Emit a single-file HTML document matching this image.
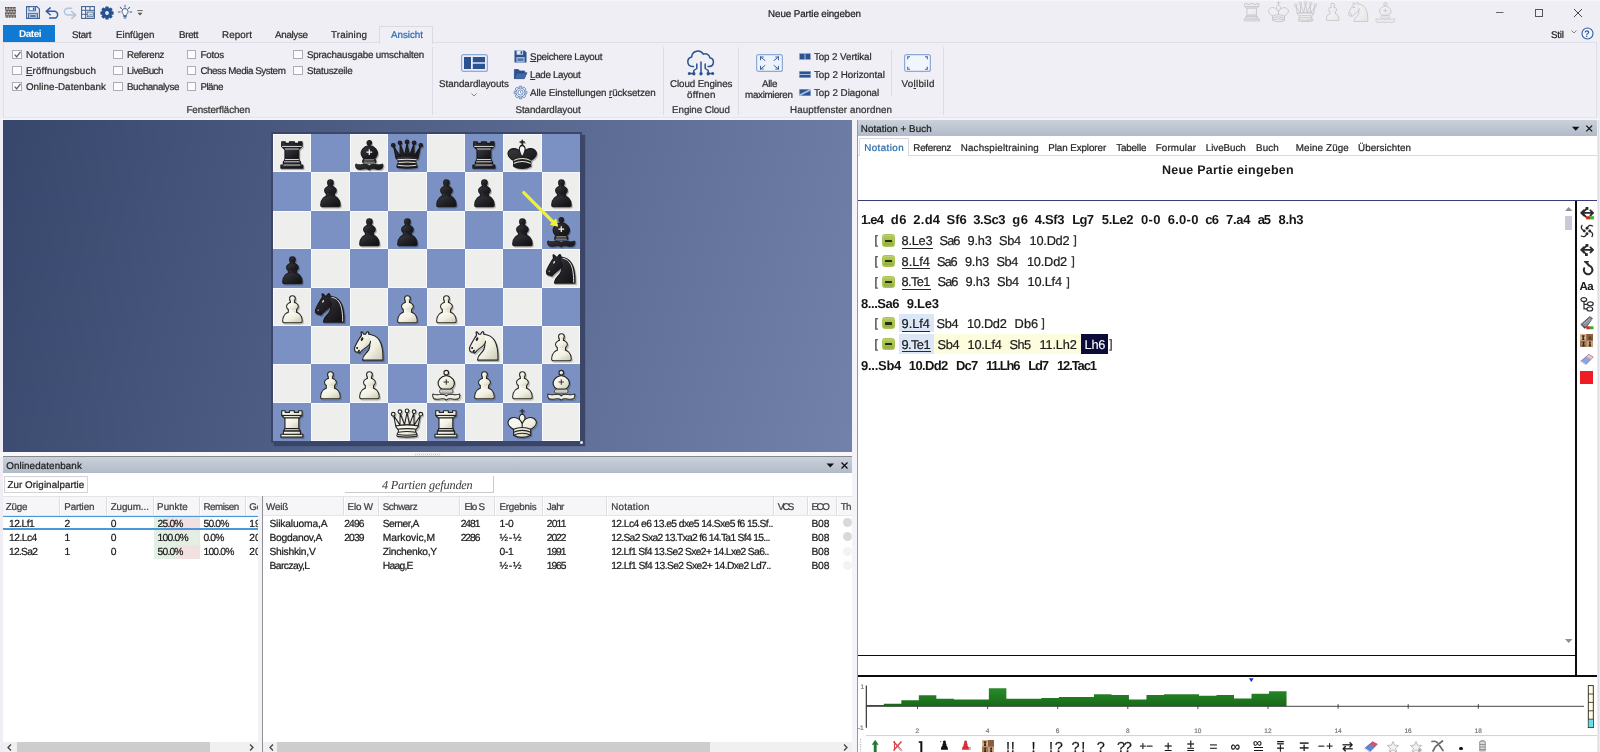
<!DOCTYPE html>
<html lang="de"><head><meta charset="utf-8"><title>Neue Partie eingeben</title>
<style>
*{box-sizing:border-box;margin:0;padding:0}
html,body{width:1600px;height:752px;overflow:hidden;background:#eeeef4}
body{font-family:"Liberation Sans",sans-serif;font-size:9.8px;color:#2e2e2e;text-rendering:geometricPrecision;position:relative;line-height:1}
.a{position:absolute}
.t{position:absolute;white-space:pre;-webkit-text-stroke:.22px currentColor}
.t u{text-decoration:underline;text-underline-offset:1px}
svg{position:absolute;overflow:visible}
.cb{position:absolute;width:9.400px;height:9.200px;border:1px solid #adadb5;background:#fcfcfe}
.sep{position:absolute;width:1px;background:#dcdde5;top:47px;height:68px}
.hdr{position:absolute;height:17px;background:linear-gradient(#cad1db,#bfc7d2 45%,#b1bac7);}
.sq{position:absolute;width:38.375px;height:38.375px}
.pc{position:absolute;width:38.375px;height:38.375px}
</style></head><body>
<div id="root" style="position:absolute;left:0;top:0;width:1600px;height:752px;will-change:transform"><svg width="0" height="0" style="position:absolute"><defs>
<linearGradient id="gw" x1="0" y1="0" x2="1" y2="1"><stop offset="0" stop-color="#ffffff"/><stop offset="0.55" stop-color="#f0efe0"/><stop offset="1" stop-color="#c9c8b4"/></linearGradient>
<linearGradient id="gb" x1="0" y1="0" x2="1" y2="1"><stop offset="0" stop-color="#3a3a40"/><stop offset="0.5" stop-color="#232327"/><stop offset="1" stop-color="#101012"/></linearGradient>
<g id="wP"><g stroke="#26261f" stroke-width="2.500" fill="#26261f" stroke-linejoin="round"><rect x="21" y="14" width="3.600" height="4.500"/><rect x="18.600" y="24.500" width="8.400" height="5"/><circle cx="22.800" cy="12.500" r="2.750"/><ellipse cx="22.800" cy="21.600" rx="6.300" ry="4.400"/><path d="M13.200 40.100C12.400 40.100 11.900 39.500 11.900 38.700C11.900 32.500 16 28.100 22.800 28.100C29.600 28.100 33.700 32.500 33.700 38.700C33.700 39.500 33.200 40.100 32.400 40.100z"/></g><g fill="url(#gw)"><rect x="21" y="14" width="3.600" height="4.500"/><rect x="18.600" y="24.500" width="8.400" height="5"/><circle cx="22.800" cy="12.500" r="2.750"/><ellipse cx="22.800" cy="21.600" rx="6.300" ry="4.400"/><path d="M13.200 40.100C12.400 40.100 11.900 39.500 11.900 38.700C11.900 32.500 16 28.100 22.800 28.100C29.600 28.100 33.700 32.500 33.700 38.700C33.700 39.500 33.200 40.100 32.400 40.100z"/></g></g>
<g id="bP"><g stroke="#1d1d20" stroke-width="2.500" fill="#1d1d20" stroke-linejoin="round"><rect x="21" y="14" width="3.600" height="4.500"/><rect x="18.600" y="24.500" width="8.400" height="5"/><circle cx="22.800" cy="12.500" r="2.750"/><ellipse cx="22.800" cy="21.600" rx="6.300" ry="4.400"/><path d="M13.200 40.100C12.400 40.100 11.900 39.500 11.900 38.700C11.900 32.500 16 28.100 22.800 28.100C29.600 28.100 33.700 32.500 33.700 38.700C33.700 39.500 33.200 40.100 32.400 40.100z"/></g><g fill="url(#gb)"><rect x="21" y="14" width="3.600" height="4.500"/><rect x="18.600" y="24.500" width="8.400" height="5"/><circle cx="22.800" cy="12.500" r="2.750"/><ellipse cx="22.800" cy="21.600" rx="6.300" ry="4.400"/><path d="M13.200 40.100C12.400 40.100 11.900 39.500 11.900 38.700C11.900 32.500 16 28.100 22.800 28.100C29.600 28.100 33.700 32.500 33.700 38.700C33.700 39.500 33.200 40.100 32.400 40.100z"/></g></g>
<g id="wR" fill="url(#gw)" stroke="#222" stroke-width="1.350" stroke-linejoin="round">
<path d="M9 40.5h27v-3.5H9z"/><path d="M12 37v-4h21v4z"/><path d="M10 15V9.500h4.300v2h5.200v-2h6v2h5.200v-2H35V15l-3.500 3H13.500z"/><path d="M31 18v12.500H14V18z"/><path d="M31 30.500l1.500 2.500h-20l1.500-2.500z"/><path d="M10 15h25" fill="none"/></g>
<g id="bR" fill="url(#gb)" stroke="#1a1a1c" stroke-width="1.4" stroke-linejoin="round">
<path d="M9 40.500h27v-3.500H9z"/><path d="M12 37v-4h21v4z"/><path d="M10 15V9.500h4.300v2h5.200v-2h6v2h5.200v-2H35V15l-3.500 3H13.500z"/><path d="M31 18v12.500H14V18z"/><path d="M31 30.500l1.500 2.500h-20l1.500-2.500z"/>
<path d="M12 36.800h21M13 33h19M14 30.300h17M14 18h17M10.500 15h24" fill="none" stroke="#e8e8e8" stroke-width="1.100"/></g>
<g id="wQ" fill="url(#gw)" stroke="#222" stroke-width="1.300" stroke-linejoin="round">
<path d="M9 26c8.500-1.500 21-1.500 27 0l2.500-12.500L31 25l-.3-14.100-5.200 13.600-3-14.500-3 14.500-5.200-13.600L14 25 6.500 13.500z"/>
<path d="M9 26c0 2 1.500 2 2.500 4 1 1.500 1 1 .5 3.500-1.500 1-1 2.500-1 2.500-1.500 1.500 0 2.500 0 2.500 6.500 1 16.500 1 23 0 0 0 1.500-1 0-2.500 0 0 .5-1.500-1-2.500-.5-2.500-.5-2 .5-3.500 1-2 2.500-2 2.500-4-8.500-1.500-18.500-1.500-27 0z"/>
<path d="M11.500 30c3.500-1 18.500-1 22 0M12 33.500c6-1 15-1 21 0M11 36.200c6.500 1 16.500 1 23 0" fill="none"/>
<circle cx="6" cy="12" r="2.200"/><circle cx="14" cy="9" r="2.200"/><circle cx="22.500" cy="8" r="2.200"/><circle cx="31" cy="9" r="2.200"/><circle cx="39" cy="12" r="2.200"/></g>
<g id="bQ" fill="url(#gb)" stroke="#1a1a1c" stroke-width="1.400" stroke-linejoin="round">
<path d="M9 26c8.500-1.500 21-1.500 27 0l2.500-12.500L31 25l-.3-14.100-5.200 13.600-3-14.500-3 14.500-5.200-13.600L14 25 6.500 13.500z"/>
<path d="M9 26c0 2 1.500 2 2.500 4 1 1.500 1 1 .5 3.500-1.500 1-1 2.500-1 2.500-1.500 1.500 0 2.500 0 2.500 6.500 1 16.500 1 23 0 0 0 1.500-1 0-2.500 0 0 .5-1.500-1-2.500-.5-2.500-.5-2 .5-3.500 1-2 2.500-2 2.500-4-8.500-1.500-18.500-1.500-27 0z"/>
<circle cx="6" cy="12" r="2.100"/><circle cx="14" cy="9" r="2.100"/><circle cx="22.500" cy="8" r="2.100"/><circle cx="31" cy="9" r="2.100"/><circle cx="39" cy="12" r="2.100"/>
<path d="M11 29.500c3.500-1 19.500-1 23 0M12.300 32.800c6-1 14.500-1 20.500 0M11.300 36c6.500 1 16 1 22.500 0" fill="none" stroke="#e8e4d8" stroke-width="1.200"/></g>
<g id="wK" fill="url(#gw)" stroke="#222" stroke-width="1.300" stroke-linejoin="round" stroke-linecap="round">
<path d="M22.500 11.630V6M20 8h5" fill="none"/>
<path d="M22.500 25s4.500-7.500 3-10.500c0 0-1-2.500-3-2.500s-3 2.500-3 2.500c-1.500 3 3 10.500 3 10.500"/>
<path d="M12.500 37c5.500 3.500 14.500 3.500 20 0v-7s9-4.500 6-10.500c-4-6.500-13.500-3.500-16 4V27v-3.500c-2.500-7.500-12-10.500-16-4-3 6 6 10.500 6 10.500z"/>
<path d="M12.500 30c5.500-3 14.500-3 20 0M12.500 33.500c5.500-3 14.500-3 20 0M12.500 37c5.500-3 14.500-3 20 0" fill="none"/></g>
<g id="bK" fill="url(#gb)" stroke="#1a1a1c" stroke-width="1.400" stroke-linejoin="round" stroke-linecap="round">
<path d="M22.500 11.630V6M20 8h5" fill="none" stroke-width="1.600"/>
<path d="M22.500 25s4.500-7.500 3-10.500c0 0-1-2.500-3-2.500s-3 2.500-3 2.500c-1.500 3 3 10.500 3 10.500"/>
<path d="M12.500 37c5.500 3.500 14.500 3.500 20 0v-7s9-4.500 6-10.500c-4-6.500-13.500-3.500-16 4V27v-3.500c-2.500-7.500-12-10.500-16-4-3 6 6 10.500 6 10.500z"/>
<path d="M22.500 24.500s3.600-6.500 2.600-9.300c0 0-.9-2-2.600-2s-2.600 2-2.600 2c-1 2.800 2.600 9.300 2.600 9.300z" fill="#f4f4f4" stroke="none"/>
<path d="M13 30c5.500-2.800 13.500-2.800 19 0M13 33.500c5.500-2.800 13.500-2.800 19 0" fill="none" stroke="#e8e4d8" stroke-width="1.200"/></g>
<g id="wB" fill="url(#gw)" stroke="#222" stroke-width="1.300" stroke-linejoin="round"><path fill="#efeee0" transform="translate(22.600 38.700) scale(.930 .900) translate(-22.600 -38.100)" d="M22.600 36.600c2-2 5.500-2.300 9-1.600c3 .6 5.500.3 7.800-.9c.8 1.800.5 4.200-.8 6c-2.500 1.500-5.500 1.200-8.500.6c-3-.6-5.800-.3-7.500 1.400c-1.700-1.700-4.500-2-7.500-1.400c-3 .6-6 .9-8.500-.6c-1.300-1.800-1.600-4.200-.8-6c2.300 1.200 4.800 1.500 7.800.9c3.500-.7 7-.4 9 1.600z"/><path fill="#f3f2e6" stroke-width=".9" d="M16.300 29.300h12.600c1.600 1 1.900 3.300.900 4.800H15.400c-1-1.500-.7-3.800.9-4.800z"/><path d="M22.600 13.400C30 14.600 33 20 32 24.200C31.300 27 29.200 28.700 27.600 29.300L17.600 29.300C16 28.700 13.900 27 13.200 24.200C12.200 20 15.200 14.600 22.600 13.400z"/><circle cx="22.600" cy="10.200" r="2.700"/><path d="M16.200 31.700h12.800" fill="none" stroke-width=".6" stroke="#555"/><path d="M22.600 18v6.400M19.400 21.200h6.400" fill="none" stroke="#3a2a2a" stroke-width="1.200"/></g>
<g id="bB" fill="url(#gb)" stroke="#1a1a1c" stroke-width="1.200" stroke-linejoin="round"><path transform="translate(22.600 38.700) scale(.930 .900) translate(-22.600 -38.100)" d="M22.600 36.600c2-2 5.500-2.300 9-1.600c3 .6 5.500.3 7.800-.9c.8 1.800.5 4.200-.8 6c-2.500 1.500-5.500 1.200-8.500.6c-3-.6-5.800-.3-7.500 1.400c-1.700-1.700-4.500-2-7.500-1.400c-3 .6-6 .9-8.500-.6c-1.300-1.800-1.600-4.200-.8-6c2.300 1.200 4.800 1.500 7.800.9c3.500-.7 7-.4 9 1.600z"/><path d="M16.300 29.300h12.600c1.600 1 1.900 3.300.900 4.800H15.400c-1-1.500-.7-3.800.9-4.800z"/><path d="M22.600 13.400C30 14.600 33 20 32 24.200C31.300 27 29.200 28.700 27.600 29.300L17.600 29.300C16 28.700 13.900 27 13.200 24.200C12.200 20 15.200 14.600 22.600 13.400z"/><circle cx="22.600" cy="10.200" r="2.700"/><path d="M16.800 30.300h11.600M16 33h13.200" fill="none" stroke="#e8e4d8" stroke-width=".8"/><path d="M22.600 17.800v6.800M19.200 21.200h6.800" fill="none" stroke="#f4f4f4" stroke-width="1.500"/></g>
<g id="wN" fill="url(#gw)" stroke="#222" stroke-width="1.300" stroke-linejoin="round" stroke-linecap="round">
<path d="M22 10c10.500 1 16.500 8 16 29H15c0-9 10-6.500 8-21"/>
<path d="M24 18c.38 2.910-5.550 7.370-8 9-3 2-2.820 4.340-5 4-1.042-.94 1.410-3.040 0-3-1 0 .19 1.230-1 2-1 0-4.003 1-4-4 0-2 6-12 6-12s1.890-1.900 2-3.500c-.73-.994-.5-2-.5-3 1-1 3 2.500 3 2.500h2s.78-1.992 2.500-3c1 0 1 3 1 3"/>
<circle cx="9" cy="25.500" r=".5" fill="#222"/><ellipse cx="14.500" cy="15.500" rx=".6" ry="1.500" transform="rotate(30 14.500 15.500)" fill="#222"/></g>
<g id="bN" fill="url(#gb)" stroke="#1a1a1c" stroke-width="1.400" stroke-linejoin="round" stroke-linecap="round">
<path d="M22 10c10.500 1 16.500 8 16 29H15c0-9 10-6.500 8-21"/>
<path d="M24 18c.38 2.910-5.550 7.370-8 9-3 2-2.820 4.340-5 4-1.042-.94 1.410-3.040 0-3-1 0 .19 1.230-1 2-1 0-4.003 1-4-4 0-2 6-12 6-12s1.890-1.900 2-3.500c-.73-.994-.5-2-.5-3 1-1 3 2.500 3 2.500h2s.78-1.992 2.500-3c1 0 1 3 1 3"/>
<path d="M24.500 11.200c7.500 1.500 12 7.500 12 26.800" fill="none" stroke="#e8e8e8" stroke-width="1.100"/>
<ellipse cx="14.500" cy="15.700" rx=".8" ry="1.600" transform="rotate(35 14.500 15.700)" fill="#f0f0f0" stroke="none"/><circle cx="9" cy="25.700" r=".7" fill="#ddd" stroke="none"/></g>
</defs></svg>
<!-- title bar -->

<div class="a" style="left:0;top:0;width:1600px;height:1px;background:#f6f6fa"></div>
<div class="t" style="left:768.1px;top:9.0px;height:12px;line-height:12px;color:#1e1e1e;letter-spacing:-0.10px">Neue Partie eingeben</div>
<svg style="left:5px;top:7px" width="11" height="11" viewBox="0 0 11 11"><rect width="11" height="11" fill="#8b8682"/><g fill="#4d4946"><rect x="0" y="0" width="1.4" height="1.4"/><rect x="2.75" y="0" width="1.4" height="1.4"/><rect x="5.5" y="0" width="1.4" height="1.4"/><rect x="8.25" y="0" width="1.4" height="1.4"/><rect x="1.4" y="2.75" width="1.4" height="1.4"/><rect x="4.1" y="2.75" width="1.4" height="1.4"/><rect x="6.9" y="2.75" width="1.4" height="1.4"/><rect x="9.6" y="2.75" width="1.4" height="1.4"/><rect x="0" y="5.5" width="1.4" height="1.4"/><rect x="2.75" y="5.5" width="1.4" height="1.4"/><rect x="5.5" y="5.5" width="1.4" height="1.4"/><rect x="8.25" y="5.5" width="1.4" height="1.4"/><rect x="1.4" y="8.25" width="1.4" height="1.4"/><rect x="4.1" y="8.25" width="1.4" height="1.4"/><rect x="6.9" y="8.25" width="1.4" height="1.4"/><rect x="9.6" y="8.25" width="1.4" height="1.4"/></g><g fill="#cfcac4"><rect x="1.4" y="1.4" width="1.3" height="1.3"/><rect x="4.1" y="1.4" width="1.3" height="1.3"/><rect x="6.9" y="1.4" width="1.3" height="1.3"/><rect x="9.6" y="1.4" width="1.3" height="1.3"/><rect x="0" y="4.1" width="1.3" height="1.3"/><rect x="2.75" y="4.1" width="1.3" height="1.3"/><rect x="5.5" y="4.1" width="1.3" height="1.3"/><rect x="8.25" y="4.1" width="1.3" height="1.3"/><rect x="1.4" y="6.9" width="1.3" height="1.3"/><rect x="4.1" y="6.9" width="1.3" height="1.3"/><rect x="6.9" y="6.9" width="1.3" height="1.3"/><rect x="9.6" y="6.9" width="1.3" height="1.3"/><rect x="0" y="9.6" width="1.3" height="1.3"/><rect x="2.75" y="9.6" width="1.3" height="1.3"/><rect x="5.5" y="9.6" width="1.3" height="1.3"/><rect x="8.25" y="9.6" width="1.3" height="1.3"/></g></svg>
<svg style="left:26px;top:6px" width="14" height="13" viewBox="0 0 14 13"><path d="M.6.6h10.400l2.400 2.300v9.500H.6z" fill="#e4ebf5" stroke="#3d5f96" stroke-width="1.100"/><rect x="3" y=".8" width="6.500" height="4" fill="#f8fbff" stroke="#3d5f96" stroke-width=".9"/><rect x="6.900" y="1.500" width="1.600" height="2.600" fill="#3d5f96"/><rect x="2.600" y="7.300" width="8.800" height="5" fill="#b9c9e2" stroke="#3d5f96" stroke-width=".9"/><rect x="4.200" y="9" width="5.500" height="2" fill="#5a79ad"/></svg>
<svg style="left:45px;top:7px" width="14" height="12" viewBox="0 0 14 12"><path d="M5.200.9L1.200 4.300l4 3.400M1.400 4.300h7.800a3.400 3.400 0 0 1 0 6.800H4.600" fill="none" stroke="#2f5b9c" stroke-width="1.500" stroke-linecap="round" stroke-linejoin="round"/></svg>
<svg style="left:63px;top:7px" width="14" height="12" viewBox="0 0 14 12"><path d="M8.800 4.600l4 3.400-4 3.400M12.600 8H4.800a3.400 3.400 0 0 1 0-6.800h3.600" fill="none" stroke="#b4c3dc" stroke-width="1.500" stroke-linecap="round" stroke-linejoin="round"/></svg>
<svg style="left:81px;top:6px" width="14" height="13" viewBox="0 0 14 13"><rect x=".6" y=".6" width="12.800" height="11.800" fill="#f4f6fb" stroke="#44618f" stroke-width="1.100"/><path d="M.6 4.300h12.800M.6 8.300h12.800M4.600.6v11.800M9 .6v3.700" stroke="#44618f" stroke-width="1" fill="none"/><rect x="6.200" y="6" width="6" height="4.800" fill="#dbe3f0" stroke="#44618f" stroke-width=".8"/><path d="M7.500 9.800l1.500-1.500 1 .9.800-.7" stroke="#44618f" stroke-width=".7" fill="none"/></svg>
<svg style="left:100px;top:6px" width="14" height="14" viewBox="-7 -7 14 14"><g fill="#24508f"><rect x="-1.700" y="-6.600" width="3.400" height="3.400" rx=".7" transform="rotate(0)"/><rect x="-1.700" y="-6.600" width="3.400" height="3.400" rx=".7" transform="rotate(45)"/><rect x="-1.700" y="-6.600" width="3.400" height="3.400" rx=".7" transform="rotate(90)"/><rect x="-1.700" y="-6.600" width="3.400" height="3.400" rx=".7" transform="rotate(135)"/><rect x="-1.700" y="-6.600" width="3.400" height="3.400" rx=".7" transform="rotate(180)"/><rect x="-1.700" y="-6.600" width="3.400" height="3.400" rx=".7" transform="rotate(225)"/><rect x="-1.700" y="-6.600" width="3.400" height="3.400" rx=".7" transform="rotate(270)"/><rect x="-1.700" y="-6.600" width="3.400" height="3.400" rx=".7" transform="rotate(315)"/><circle r="4.800"/></g><circle r="1.900" fill="#eeeef4"/></svg>
<svg style="left:118px;top:5px" width="14" height="15" viewBox="-7 -7 14 15"><g stroke="#44618f" stroke-width="1" stroke-linecap="round" fill="none"><path d="M0 -4.900V-6.700" transform="rotate(-90)"/><path d="M0 -4.900V-6.700" transform="rotate(-45)"/><path d="M0 -4.900V-6.700" transform="rotate(0)"/><path d="M0 -4.900V-6.700" transform="rotate(45)"/><path d="M0 -4.900V-6.700" transform="rotate(90)"/><path d="M-1.500 3.200c0-1.600-1.500-2-1.500-3.700a3 3 0 0 1 6 0c0 1.700-1.500 2.100-1.500 3.700z" fill="#f6f8fc"/><path d="M-1.300 4.600h2.600M-.9 6h1.800"/></g></svg>
<svg style="left:137px;top:10px" width="6" height="6" viewBox="0 0 6 6"><path d="M.3.600h5.400" stroke="#555" stroke-width=".9"/><path d="M.5 2.700h5L3 5.600z" fill="#555"/></svg>
<svg style="left:1239px;top:-2.500px;opacity:.22" width="25.5" height="25.5" viewBox="0 0 45 45"><use href="#wR"/></svg>
<svg style="left:1265px;top:-2.500px;opacity:.22" width="27" height="27" viewBox="0 0 45 45"><use href="#wK"/></svg>
<svg style="left:1292px;top:-2.500px;opacity:.22" width="27" height="27" viewBox="0 0 45 45"><use href="#wQ"/></svg>
<svg style="left:1319.5px;top:-2.500px;opacity:.22" width="25" height="25" viewBox="0 0 45 45"><use href="#wP"/></svg>
<svg style="left:1345px;top:-2.500px;opacity:.22" width="27" height="27" viewBox="0 0 45 45"><use href="#wN"/></svg>
<svg style="left:1372px;top:-2.500px;opacity:.22" width="26.5" height="26.5" viewBox="0 0 45 45"><use href="#wB"/></svg>
<svg style="left:1496px;top:8px" width="90" height="10" viewBox="0 0 90 10"><path d="M0 4.500h7.500" stroke="#666" stroke-width="1" fill="none"/><rect x="39.500" y="1.500" width="7" height="7" fill="none" stroke="#555" stroke-width="1"/><path d="M78 1l8 8M86 1l-8 8" stroke="#444" stroke-width="1" fill="none"/></svg>
<div class="a" style="left:3px;top:25px;width:52px;height:18px;background:#1079d4"></div>
<div class="t" style="left:18.9px;top:29.4px;height:12px;line-height:12px;font-size:10px;font-weight:bold;-webkit-text-stroke:0;color:#fff;letter-spacing:-0.44px">Datei</div>
<div class="a" style="left:3px;top:42.400px;width:1594px;height:75.600px;background:#efeff5;border:1px solid #dedfe7;border-bottom-color:#e4e5ec"></div>
<div class="a" style="left:379.400px;top:26.200px;width:53.300px;height:17.800px;background:#efeff5;border:1px solid #d9dae3;border-bottom:none"></div>
<div class="t" style="left:72.1px;top:29.5px;height:12px;line-height:12px;color:#2b2b2b;letter-spacing:-0.35px">Start</div>
<div class="t" style="left:116.1px;top:29.5px;height:12px;line-height:12px;color:#2b2b2b;letter-spacing:-0.06px">Einfügen</div>
<div class="t" style="left:179.1px;top:29.5px;height:12px;line-height:12px;color:#2b2b2b;letter-spacing:-0.35px">Brett</div>
<div class="t" style="left:222.1px;top:29.5px;height:12px;line-height:12px;color:#2b2b2b;letter-spacing:0.08px">Report</div>
<div class="t" style="left:275.1px;top:29.5px;height:12px;line-height:12px;color:#2b2b2b;letter-spacing:-0.34px">Analyse</div>
<div class="t" style="left:331.1px;top:29.5px;height:12px;line-height:12px;color:#2b2b2b;letter-spacing:0.11px">Training</div>
<div class="t" style="left:391.1px;top:29.5px;height:12px;line-height:12px;color:#2a6db0;letter-spacing:-0.06px">Ansicht</div>
<div class="t" style="left:1551.1px;top:29.5px;height:12px;line-height:12px;color:#222;letter-spacing:-0.27px">Stil</div>
<svg style="left:1571px;top:30px" width="6" height="4" viewBox="0 0 6 4"><path d="M.5.500L3 3l2.500-2.500" fill="none" stroke="#777" stroke-width=".9"/></svg>
<svg style="left:1581px;top:27px" width="13" height="13" viewBox="0 0 13 13"><circle cx="6.500" cy="6.500" r="5.500" fill="#f4f7fc" stroke="#2f5b9c" stroke-width="1.100"/></svg>
<div class="t" style="left:1584.1px;top:29.0px;height:12px;line-height:12px;font-size:9.5px;font-weight:bold;-webkit-text-stroke:0;color:#2f5b9c">?</div>
<div class="cb" style="left:12.2px;top:49.9px"></div>
<svg style="left:13.5px;top:51.0px" width="7" height="7" viewBox="0 0 7 7"><path d="M.7 3.600l2 2.200L6.400.8" fill="none" stroke="#6a6a6a" stroke-width="1.400"/></svg>
<div class="t" style="left:25.9px;top:50.2px;height:12px;line-height:12px;letter-spacing:0.29px">Notation</div>
<div class="cb" style="left:12.2px;top:65.9px"></div>
<div class="t" style="left:25.9px;top:66.2px;height:12px;line-height:12px;letter-spacing:0.12px"><u>E</u>röffnungsbuch</div>
<div class="cb" style="left:12.2px;top:81.9px"></div>
<svg style="left:13.5px;top:83.0px" width="7" height="7" viewBox="0 0 7 7"><path d="M.7 3.600l2 2.200L6.400.8" fill="none" stroke="#6a6a6a" stroke-width="1.400"/></svg>
<div class="t" style="left:25.9px;top:82.2px;height:12px;line-height:12px;letter-spacing:0.07px">Online-Datenbank</div>
<div class="cb" style="left:113.2px;top:49.9px"></div>
<div class="t" style="left:126.9px;top:50.2px;height:12px;line-height:12px;letter-spacing:-0.32px">Referenz</div>
<div class="cb" style="left:113.2px;top:65.9px"></div>
<div class="t" style="left:126.9px;top:66.2px;height:12px;line-height:12px;letter-spacing:-0.54px">LiveBuch</div>
<div class="cb" style="left:113.2px;top:81.9px"></div>
<div class="t" style="left:126.9px;top:82.2px;height:12px;line-height:12px;letter-spacing:-0.36px">Buchanalyse</div>
<div class="cb" style="left:186.7px;top:49.9px"></div>
<div class="t" style="left:200.4px;top:50.2px;height:12px;line-height:12px;letter-spacing:-0.18px">Fotos</div>
<div class="cb" style="left:186.7px;top:65.9px"></div>
<div class="t" style="left:200.4px;top:66.2px;height:12px;line-height:12px;letter-spacing:-0.42px">Chess Media System</div>
<div class="cb" style="left:186.7px;top:81.9px"></div>
<div class="t" style="left:200.4px;top:82.2px;height:12px;line-height:12px;letter-spacing:-0.52px">Pläne</div>
<div class="cb" style="left:293.2px;top:49.9px"></div>
<div class="t" style="left:306.9px;top:50.2px;height:12px;line-height:12px;letter-spacing:-0.18px">Sprachausgabe umschalten</div>
<div class="cb" style="left:293.2px;top:65.9px"></div>
<div class="t" style="left:306.9px;top:66.2px;height:12px;line-height:12px;letter-spacing:-0.22px">Statuszeile</div>
<div class="t" style="left:186.4px;top:105.0px;height:12px;line-height:12px;color:#333;letter-spacing:-0.08px">Fensterflächen</div>
<div class="sep" style="left:432px"></div>
<div class="sep" style="left:663px"></div>
<div class="sep" style="left:738px"></div>
<div class="sep" style="left:943px"></div>
<div class="sep" style="left:891px;top:50px;height:46px"></div>
<svg style="left:460.500px;top:53.500px" width="27" height="18" viewBox="0 0 27 18"><rect x=".6" y=".6" width="25.800" height="16.800" rx="2" fill="#e8eefa" stroke="#8fa9d4" stroke-width="1.200"/><rect x="3" y="3" width="7" height="12" fill="#2c528f"/><rect x="11.800" y="3" width="12.200" height="5.300" fill="#2c528f"/><rect x="11.800" y="9.700" width="12.200" height="5.300" fill="#2c528f"/></svg>
<div class="t" style="left:439.1px;top:79.2px;height:12px;line-height:12px;letter-spacing:-0.07px">Standardlayouts</div>
<svg style="left:470.500px;top:92.500px" width="6" height="4" viewBox="0 0 6 4"><path d="M.5.500L3 3l2.500-2.500" fill="none" stroke="#777" stroke-width=".9"/></svg>
<svg style="left:514px;top:49.500px" width="13" height="13" viewBox="0 0 13 13"><path d="M.5.500h10l2 2v10H.5z" fill="#2c528f"/><rect x="2.600" y=".5" width="6.500" height="4.200" fill="#dfe8f6"/><rect x="6.600" y="1.200" width="1.600" height="2.700" fill="#2c528f"/><rect x="2.300" y="7" width="8.400" height="5.500" fill="#9db3d6"/><rect x="3.600" y="8.600" width="5.800" height="2.200" fill="#4a6da6"/></svg>
<svg style="left:514px;top:69px" width="13" height="10" viewBox="0 0 13 10"><path d="M.4 9.500V.5h4l1.200 1.500h5v2" fill="#2c528f" stroke="#2c528f" stroke-width=".8" stroke-linejoin="round"/><path d="M.5 9.600l2.400-5.800h10l-2.600 5.800z" fill="#3f69aa" stroke="#23457d" stroke-width=".8" stroke-linejoin="round"/></svg>
<svg style="left:514px;top:86px" width="13" height="13" viewBox="-6.500 -6.500 13 13"><g fill="#eaf0fa" stroke="#4d72ab" stroke-width=".8"><rect x="-1.400" y="-6.300" width="2.800" height="3" rx=".6" transform="rotate(0)"/><rect x="-1.400" y="-6.300" width="2.800" height="3" rx=".6" transform="rotate(45)"/><rect x="-1.400" y="-6.300" width="2.800" height="3" rx=".6" transform="rotate(90)"/><rect x="-1.400" y="-6.300" width="2.800" height="3" rx=".6" transform="rotate(135)"/><rect x="-1.400" y="-6.300" width="2.800" height="3" rx=".6" transform="rotate(180)"/><rect x="-1.400" y="-6.300" width="2.800" height="3" rx=".6" transform="rotate(225)"/><rect x="-1.400" y="-6.300" width="2.800" height="3" rx=".6" transform="rotate(270)"/><rect x="-1.400" y="-6.300" width="2.800" height="3" rx=".6" transform="rotate(315)"/><circle r="4.500"/></g><circle r="2.600" fill="#f7f9fd" stroke="#4d72ab" stroke-width=".8"/><path d="M0-1.500V.2l1.200.8" stroke="#4d72ab" stroke-width=".7" fill="none"/></svg>
<div class="t" style="left:530.1px;top:51.7px;height:12px;line-height:12px;letter-spacing:-0.26px"><u>S</u>peichere Layout</div>
<div class="t" style="left:530.1px;top:70.0px;height:12px;line-height:12px;letter-spacing:-0.34px"><u>L</u>ade Layout</div>
<div class="t" style="left:530.1px;top:88.2px;height:12px;line-height:12px;letter-spacing:-0.09px">Alle Einstellungen <u>r</u>ücksetzen</div>
<div class="t" style="left:515.4px;top:105.0px;height:12px;line-height:12px;color:#333;letter-spacing:-0.05px">Standardlayout</div>
<svg style="left:686px;top:48px" width="30" height="29" viewBox="0 0 30 29"><g fill="none" stroke="#2c528f" stroke-width="1.500" stroke-linecap="round" stroke-linejoin="round"><path d="M7.500 18.500h-1.200a4.800 4.800 0 0 1-.6-9.500 6.200 6.200 0 0 1 11.600-2.800 4.600 4.600 0 0 1 6.600 3.600 4.400 4.400 0 0 1-.6 8.700h-1.300"/><path d="M15 14v10.500M10.800 16v4.500l-3 2v2M19.200 16v4.500l3 2v2M4.500 25.500h3.300M22.200 25.500h3.300"/></g><g fill="#2c528f"><circle cx="15" cy="25.800" r="1.700"/><circle cx="7.800" cy="25.800" r="1.700"/><circle cx="22.200" cy="25.800" r="1.700"/><circle cx="3.300" cy="25.500" r="1.500"/><circle cx="26.700" cy="25.500" r="1.500"/></g></svg>
<div class="t" style="left:670.1px;top:79.0px;height:12px;line-height:12px;letter-spacing:-0.12px">Cloud Engines</div>
<div class="t" style="left:687.1px;top:89.8px;height:12px;line-height:12px;letter-spacing:0.25px">öffnen</div>
<div class="t" style="left:672.1px;top:105.0px;height:12px;line-height:12px;color:#333;letter-spacing:-0.09px">Engine Cloud</div>
<svg style="left:755.500px;top:53.500px" width="27" height="18" viewBox="0 0 27 18"><rect x=".6" y=".6" width="25.800" height="16.800" rx="2" fill="#eef3fb" stroke="#8fa9d4" stroke-width="1.200"/><g transform="translate(13.500 9) scale(1 1)"><path d="M4.500 2.500l4.500 3.500M9 6V3.200M9 6H6.200" fill="none" stroke="#3a64a6" stroke-width="1" stroke-linecap="round"/></g><g transform="translate(13.500 9) scale(-1 1)"><path d="M4.500 2.500l4.500 3.500M9 6V3.200M9 6H6.200" fill="none" stroke="#3a64a6" stroke-width="1" stroke-linecap="round"/></g><g transform="translate(13.500 9) scale(1 -1)"><path d="M4.500 2.500l4.500 3.500M9 6V3.200M9 6H6.200" fill="none" stroke="#3a64a6" stroke-width="1" stroke-linecap="round"/></g><g transform="translate(13.500 9) scale(-1 -1)"><path d="M4.500 2.500l4.500 3.500M9 6V3.200M9 6H6.200" fill="none" stroke="#3a64a6" stroke-width="1" stroke-linecap="round"/></g></svg>
<div class="t" style="left:762.1px;top:79.0px;height:12px;line-height:12px;letter-spacing:-0.35px">Alle</div>
<div class="t" style="left:745.1px;top:89.8px;height:12px;line-height:12px;letter-spacing:-0.32px">maximieren</div>
<svg style="left:799px;top:52.500px" width="12" height="7" viewBox="0 0 12 7"><rect width="12" height="7" fill="#a8bde0"/><rect x=".8" y=".8" width="4.700" height="5.400" fill="#2c528f"/><rect x="6.500" y=".8" width="4.700" height="5.400" fill="#2c528f"/></svg>
<svg style="left:799px;top:70.500px" width="12" height="7" viewBox="0 0 12 7"><rect width="12" height="7" fill="#a8bde0"/><rect x=".6" y=".6" width="10.800" height="2.400" fill="#2c528f"/><rect x=".6" y="4" width="10.800" height="2.400" fill="#2c528f"/></svg>
<svg style="left:799px;top:89px" width="12" height="7" viewBox="0 0 12 7"><rect width="12" height="7" fill="#a8bde0"/><path d="M.6.600H10L.6 5.200z" fill="#2c528f"/><path d="M11.400 6.400H2L11.400 1.800z" fill="#2c528f"/></svg>
<div class="t" style="left:813.9px;top:51.7px;height:12px;line-height:12px;letter-spacing:-0.08px">Top 2 Vertikal</div>
<div class="t" style="left:813.9px;top:70.0px;height:12px;line-height:12px;letter-spacing:0.01px">Top 2 Horizontal</div>
<div class="t" style="left:813.9px;top:88.2px;height:12px;line-height:12px">Top 2 Diagonal</div>
<svg style="left:904px;top:53.500px" width="27" height="18" viewBox="0 0 27 18"><rect x=".6" y=".6" width="25.800" height="16.800" rx="2" fill="#f1f5fc" stroke="#8fa9d4" stroke-width="1.200"/><g transform="translate(13.500 9) scale(1 1)"><path d="M7.500 6.200h2.300V3.800" fill="none" stroke="#3a64a6" stroke-width="1.100"/></g><g transform="translate(13.500 9) scale(-1 1)"><path d="M7.500 6.200h2.300V3.800" fill="none" stroke="#3a64a6" stroke-width="1.100"/></g><g transform="translate(13.500 9) scale(1 -1)"><path d="M7.500 6.200h2.300V3.800" fill="none" stroke="#3a64a6" stroke-width="1.100"/></g><g transform="translate(13.500 9) scale(-1 -1)"><path d="M7.500 6.200h2.300V3.800" fill="none" stroke="#3a64a6" stroke-width="1.100"/></g></svg>
<div class="t" style="left:901.6px;top:79.0px;height:12px;line-height:12px;letter-spacing:0.25px">Vo<u>l</u>lbild</div>
<div class="t" style="left:790.1px;top:105.0px;height:12px;line-height:12px;color:#333;letter-spacing:0.08px">Hauptfenster anordnen</div>
<div class="a" style="left:0;top:118px;width:1600px;height:2px;background:#f3f3f8"></div><!-- board pane -->
<div class="a" style="left:3px;top:120px;width:849px;height:332px;background:linear-gradient(93deg,#38486e 0%,#6f7fa9 100%)"></div>
<div class="a" style="left:3px;top:120px;width:849px;height:332px;background:linear-gradient(180deg,rgba(0,0,0,.02),rgba(255,255,255,.02))"></div>
<div class="a" style="left:271px;top:132px;width:311.0px;height:311.0px;background:#3b4669;box-shadow:3px 3px 1px 0 rgba(57,68,102,.97)"></div>
<div class="a" style="left:273px;top:134px;width:307.0px;height:307.0px;background:#eeeeee"></div>
<div class="sq" style="left:273.000px;top:134.000px;background:#eeeeed;box-shadow:inset 0 0 0 1px rgba(248,250,255,.9)"></div>
<div class="sq" style="left:311.375px;top:134.000px;background:#7b91c3"></div>
<div class="sq" style="left:349.750px;top:134.000px;background:#eeeeed;box-shadow:inset 0 0 0 1px rgba(248,250,255,.9)"></div>
<div class="sq" style="left:388.125px;top:134.000px;background:#7b91c3"></div>
<div class="sq" style="left:426.500px;top:134.000px;background:#eeeeed;box-shadow:inset 0 0 0 1px rgba(248,250,255,.9)"></div>
<div class="sq" style="left:464.875px;top:134.000px;background:#7b91c3"></div>
<div class="sq" style="left:503.250px;top:134.000px;background:#eeeeed;box-shadow:inset 0 0 0 1px rgba(248,250,255,.9)"></div>
<div class="sq" style="left:541.625px;top:134.000px;background:#7b91c3"></div>
<div class="sq" style="left:273.000px;top:172.375px;background:#7b91c3"></div>
<div class="sq" style="left:311.375px;top:172.375px;background:#eeeeed;box-shadow:inset 0 0 0 1px rgba(248,250,255,.9)"></div>
<div class="sq" style="left:349.750px;top:172.375px;background:#7b91c3"></div>
<div class="sq" style="left:388.125px;top:172.375px;background:#eeeeed;box-shadow:inset 0 0 0 1px rgba(248,250,255,.9)"></div>
<div class="sq" style="left:426.500px;top:172.375px;background:#7b91c3"></div>
<div class="sq" style="left:464.875px;top:172.375px;background:#eeeeed;box-shadow:inset 0 0 0 1px rgba(248,250,255,.9)"></div>
<div class="sq" style="left:503.250px;top:172.375px;background:#7b91c3"></div>
<div class="sq" style="left:541.625px;top:172.375px;background:#eeeeed;box-shadow:inset 0 0 0 1px rgba(248,250,255,.9)"></div>
<div class="sq" style="left:273.000px;top:210.750px;background:#eeeeed;box-shadow:inset 0 0 0 1px rgba(248,250,255,.9)"></div>
<div class="sq" style="left:311.375px;top:210.750px;background:#7b91c3"></div>
<div class="sq" style="left:349.750px;top:210.750px;background:#eeeeed;box-shadow:inset 0 0 0 1px rgba(248,250,255,.9)"></div>
<div class="sq" style="left:388.125px;top:210.750px;background:#7b91c3"></div>
<div class="sq" style="left:426.500px;top:210.750px;background:#eeeeed;box-shadow:inset 0 0 0 1px rgba(248,250,255,.9)"></div>
<div class="sq" style="left:464.875px;top:210.750px;background:#7b91c3"></div>
<div class="sq" style="left:503.250px;top:210.750px;background:#eeeeed;box-shadow:inset 0 0 0 1px rgba(248,250,255,.9)"></div>
<div class="sq" style="left:541.625px;top:210.750px;background:#7b91c3"></div>
<div class="sq" style="left:273.000px;top:249.125px;background:#7b91c3"></div>
<div class="sq" style="left:311.375px;top:249.125px;background:#eeeeed;box-shadow:inset 0 0 0 1px rgba(248,250,255,.9)"></div>
<div class="sq" style="left:349.750px;top:249.125px;background:#7b91c3"></div>
<div class="sq" style="left:388.125px;top:249.125px;background:#eeeeed;box-shadow:inset 0 0 0 1px rgba(248,250,255,.9)"></div>
<div class="sq" style="left:426.500px;top:249.125px;background:#7b91c3"></div>
<div class="sq" style="left:464.875px;top:249.125px;background:#eeeeed;box-shadow:inset 0 0 0 1px rgba(248,250,255,.9)"></div>
<div class="sq" style="left:503.250px;top:249.125px;background:#7b91c3"></div>
<div class="sq" style="left:541.625px;top:249.125px;background:#eeeeed;box-shadow:inset 0 0 0 1px rgba(248,250,255,.9)"></div>
<div class="sq" style="left:273.000px;top:287.500px;background:#eeeeed;box-shadow:inset 0 0 0 1px rgba(248,250,255,.9)"></div>
<div class="sq" style="left:311.375px;top:287.500px;background:#7b91c3"></div>
<div class="sq" style="left:349.750px;top:287.500px;background:#eeeeed;box-shadow:inset 0 0 0 1px rgba(248,250,255,.9)"></div>
<div class="sq" style="left:388.125px;top:287.500px;background:#7b91c3"></div>
<div class="sq" style="left:426.500px;top:287.500px;background:#eeeeed;box-shadow:inset 0 0 0 1px rgba(248,250,255,.9)"></div>
<div class="sq" style="left:464.875px;top:287.500px;background:#7b91c3"></div>
<div class="sq" style="left:503.250px;top:287.500px;background:#eeeeed;box-shadow:inset 0 0 0 1px rgba(248,250,255,.9)"></div>
<div class="sq" style="left:541.625px;top:287.500px;background:#7b91c3"></div>
<div class="sq" style="left:273.000px;top:325.875px;background:#7b91c3"></div>
<div class="sq" style="left:311.375px;top:325.875px;background:#eeeeed;box-shadow:inset 0 0 0 1px rgba(248,250,255,.9)"></div>
<div class="sq" style="left:349.750px;top:325.875px;background:#7b91c3"></div>
<div class="sq" style="left:388.125px;top:325.875px;background:#eeeeed;box-shadow:inset 0 0 0 1px rgba(248,250,255,.9)"></div>
<div class="sq" style="left:426.500px;top:325.875px;background:#7b91c3"></div>
<div class="sq" style="left:464.875px;top:325.875px;background:#eeeeed;box-shadow:inset 0 0 0 1px rgba(248,250,255,.9)"></div>
<div class="sq" style="left:503.250px;top:325.875px;background:#7b91c3"></div>
<div class="sq" style="left:541.625px;top:325.875px;background:#eeeeed;box-shadow:inset 0 0 0 1px rgba(248,250,255,.9)"></div>
<div class="sq" style="left:273.000px;top:364.250px;background:#eeeeed;box-shadow:inset 0 0 0 1px rgba(248,250,255,.9)"></div>
<div class="sq" style="left:311.375px;top:364.250px;background:#7b91c3"></div>
<div class="sq" style="left:349.750px;top:364.250px;background:#eeeeed;box-shadow:inset 0 0 0 1px rgba(248,250,255,.9)"></div>
<div class="sq" style="left:388.125px;top:364.250px;background:#7b91c3"></div>
<div class="sq" style="left:426.500px;top:364.250px;background:#eeeeed;box-shadow:inset 0 0 0 1px rgba(248,250,255,.9)"></div>
<div class="sq" style="left:464.875px;top:364.250px;background:#7b91c3"></div>
<div class="sq" style="left:503.250px;top:364.250px;background:#eeeeed;box-shadow:inset 0 0 0 1px rgba(248,250,255,.9)"></div>
<div class="sq" style="left:541.625px;top:364.250px;background:#7b91c3"></div>
<div class="sq" style="left:273.000px;top:402.625px;background:#7b91c3"></div>
<div class="sq" style="left:311.375px;top:402.625px;background:#eeeeed;box-shadow:inset 0 0 0 1px rgba(248,250,255,.9)"></div>
<div class="sq" style="left:349.750px;top:402.625px;background:#7b91c3"></div>
<div class="sq" style="left:388.125px;top:402.625px;background:#eeeeed;box-shadow:inset 0 0 0 1px rgba(248,250,255,.9)"></div>
<div class="sq" style="left:426.500px;top:402.625px;background:#7b91c3"></div>
<div class="sq" style="left:464.875px;top:402.625px;background:#eeeeed;box-shadow:inset 0 0 0 1px rgba(248,250,255,.9)"></div>
<div class="sq" style="left:503.250px;top:402.625px;background:#7b91c3"></div>
<div class="sq" style="left:541.625px;top:402.625px;background:#eeeeed;box-shadow:inset 0 0 0 1px rgba(248,250,255,.9)"></div>
<svg class="pc" style="left:273.000px;top:134.000px" viewBox="0 0 45 45"><g transform="translate(22.150 22.100) scale(.955 1) translate(-22.500 -22.500)"><use href="#bR" transform="translate(1.200 1.500)" opacity=".3"/><use href="#bR"/></g></svg>
<svg class="pc" style="left:349.750px;top:134.000px" viewBox="0 0 45 45"><g transform="translate(0 0)"><use href="#bB" transform="translate(1.200 1.500)" opacity=".3"/><use href="#bB"/></g></svg>
<svg class="pc" style="left:388.125px;top:134.000px" viewBox="0 0 45 45"><g transform="translate(22.300 23.460) scale(.978 .980) translate(-22.500 -22.500)"><use href="#bQ" transform="translate(1.200 1.500)" opacity=".3"/><use href="#bQ"/></g></svg>
<svg class="pc" style="left:464.875px;top:134.000px" viewBox="0 0 45 45"><g transform="translate(22.150 22.100) scale(.955 1) translate(-22.500 -22.500)"><use href="#bR" transform="translate(1.200 1.500)" opacity=".3"/><use href="#bR"/></g></svg>
<svg class="pc" style="left:503.250px;top:134.000px" viewBox="0 0 45 45"><g transform="translate(22.500 23.540) scale(1 .980) translate(-22.500 -22.500)"><use href="#bK" transform="translate(1.200 1.500)" opacity=".3"/><use href="#bK"/></g></svg>
<svg class="pc" style="left:311.375px;top:172.375px" viewBox="0 0 45 45"><g transform="translate(0 0)"><use href="#bP" transform="translate(1.200 1.500)" opacity=".3"/><use href="#bP"/></g></svg>
<svg class="pc" style="left:426.500px;top:172.375px" viewBox="0 0 45 45"><g transform="translate(0 0)"><use href="#bP" transform="translate(1.200 1.500)" opacity=".3"/><use href="#bP"/></g></svg>
<svg class="pc" style="left:464.875px;top:172.375px" viewBox="0 0 45 45"><g transform="translate(0 0)"><use href="#bP" transform="translate(1.200 1.500)" opacity=".3"/><use href="#bP"/></g></svg>
<svg class="pc" style="left:541.625px;top:172.375px" viewBox="0 0 45 45"><g transform="translate(0 0)"><use href="#bP" transform="translate(1.200 1.500)" opacity=".3"/><use href="#bP"/></g></svg>
<svg class="pc" style="left:349.750px;top:210.750px" viewBox="0 0 45 45"><g transform="translate(0 0)"><use href="#bP" transform="translate(1.200 1.500)" opacity=".3"/><use href="#bP"/></g></svg>
<svg class="pc" style="left:388.125px;top:210.750px" viewBox="0 0 45 45"><g transform="translate(0 0)"><use href="#bP" transform="translate(1.200 1.500)" opacity=".3"/><use href="#bP"/></g></svg>
<svg class="pc" style="left:503.250px;top:210.750px" viewBox="0 0 45 45"><g transform="translate(0 0)"><use href="#bP" transform="translate(1.200 1.500)" opacity=".3"/><use href="#bP"/></g></svg>
<svg class="pc" style="left:541.625px;top:210.750px" viewBox="0 0 45 45"><g transform="translate(0 0)"><use href="#bB" transform="translate(1.200 1.500)" opacity=".3"/><use href="#bB"/></g></svg>
<svg class="pc" style="left:273.000px;top:249.125px" viewBox="0 0 45 45"><g transform="translate(0 0)"><use href="#bP" transform="translate(1.200 1.500)" opacity=".3"/><use href="#bP"/></g></svg>
<svg class="pc" style="left:541.625px;top:249.125px" viewBox="0 0 45 45"><g transform="translate(22.500 22.700) scale(1.045) translate(-22.500 -22.500)"><use href="#bN" transform="translate(1.200 1.500)" opacity=".3"/><use href="#bN"/></g></svg>
<svg class="pc" style="left:273.000px;top:287.500px" viewBox="0 0 45 45"><g transform="translate(0 0)"><use href="#wP" transform="translate(1.200 1.500)" opacity=".3"/><use href="#wP"/></g></svg>
<svg class="pc" style="left:311.375px;top:287.500px" viewBox="0 0 45 45"><g transform="translate(22.500 22.700) scale(1.045) translate(-22.500 -22.500)"><use href="#bN" transform="translate(1.200 1.500)" opacity=".3"/><use href="#bN"/></g></svg>
<svg class="pc" style="left:388.125px;top:287.500px" viewBox="0 0 45 45"><g transform="translate(0 0)"><use href="#wP" transform="translate(1.200 1.500)" opacity=".3"/><use href="#wP"/></g></svg>
<svg class="pc" style="left:426.500px;top:287.500px" viewBox="0 0 45 45"><g transform="translate(0 0)"><use href="#wP" transform="translate(1.200 1.500)" opacity=".3"/><use href="#wP"/></g></svg>
<svg class="pc" style="left:349.750px;top:325.875px" viewBox="0 0 45 45"><g transform="translate(22.500 22.700) scale(1.045) translate(-22.500 -22.500)"><use href="#wN" transform="translate(1.200 1.500)" opacity=".3"/><use href="#wN"/></g></svg>
<svg class="pc" style="left:464.875px;top:325.875px" viewBox="0 0 45 45"><g transform="translate(22.500 22.700) scale(1.045) translate(-22.500 -22.500)"><use href="#wN" transform="translate(1.200 1.500)" opacity=".3"/><use href="#wN"/></g></svg>
<svg class="pc" style="left:541.625px;top:325.875px" viewBox="0 0 45 45"><g transform="translate(0 0)"><use href="#wP" transform="translate(1.200 1.500)" opacity=".3"/><use href="#wP"/></g></svg>
<svg class="pc" style="left:311.375px;top:364.250px" viewBox="0 0 45 45"><g transform="translate(0 0)"><use href="#wP" transform="translate(1.200 1.500)" opacity=".3"/><use href="#wP"/></g></svg>
<svg class="pc" style="left:349.750px;top:364.250px" viewBox="0 0 45 45"><g transform="translate(0 0)"><use href="#wP" transform="translate(1.200 1.500)" opacity=".3"/><use href="#wP"/></g></svg>
<svg class="pc" style="left:426.500px;top:364.250px" viewBox="0 0 45 45"><g transform="translate(0 0)"><use href="#wB" transform="translate(1.200 1.500)" opacity=".3"/><use href="#wB"/></g></svg>
<svg class="pc" style="left:464.875px;top:364.250px" viewBox="0 0 45 45"><g transform="translate(0 0)"><use href="#wP" transform="translate(1.200 1.500)" opacity=".3"/><use href="#wP"/></g></svg>
<svg class="pc" style="left:503.250px;top:364.250px" viewBox="0 0 45 45"><g transform="translate(0 0)"><use href="#wP" transform="translate(1.200 1.500)" opacity=".3"/><use href="#wP"/></g></svg>
<svg class="pc" style="left:541.625px;top:364.250px" viewBox="0 0 45 45"><g transform="translate(0 0)"><use href="#wB" transform="translate(1.200 1.500)" opacity=".3"/><use href="#wB"/></g></svg>
<svg class="pc" style="left:273.000px;top:402.625px" viewBox="0 0 45 45"><g transform="translate(22.150 22.100) scale(.955 1) translate(-22.500 -22.500)"><use href="#wR" transform="translate(1.200 1.500)" opacity=".3"/><use href="#wR"/></g></svg>
<svg class="pc" style="left:388.125px;top:402.625px" viewBox="0 0 45 45"><g transform="translate(22.300 23.460) scale(.978 .980) translate(-22.500 -22.500)"><use href="#wQ" transform="translate(1.200 1.500)" opacity=".3"/><use href="#wQ"/></g></svg>
<svg class="pc" style="left:426.500px;top:402.625px" viewBox="0 0 45 45"><g transform="translate(22.150 22.100) scale(.955 1) translate(-22.500 -22.500)"><use href="#wR" transform="translate(1.200 1.500)" opacity=".3"/><use href="#wR"/></g></svg>
<svg class="pc" style="left:503.250px;top:402.625px" viewBox="0 0 45 45"><g transform="translate(22.500 23.540) scale(1 .980) translate(-22.500 -22.500)"><use href="#wK" transform="translate(1.200 1.500)" opacity=".3"/><use href="#wK"/></g></svg>
<svg style="left:510px;top:180px" width="60" height="60" viewBox="510 180 60 60"><path d="M523.800 192.600L553.500 222.300" stroke="#f0f03c" stroke-width="3.300" stroke-linecap="round"/><path d="M557.600 226.200l-7.200-1.800 5.400-5.400z" fill="#f0f03c" stroke="#f0f03c" stroke-width="1" stroke-linejoin="round"/></svg>
<div class="a" style="left:579.500px;top:440.500px;width:3px;height:3px;border-radius:50%;background:#e8ecf6"></div>
<div class="a" style="left:0;top:452px;width:857px;height:5px;background:#f8f8fb"></div>
<div class="a" style="left:3px;top:456px;width:850px;height:1px;background:#86888c"></div>
<svg style="left:414px;top:453px" width="28" height="3" viewBox="0 0 28 3"><path d="M1 2.500l1-2" stroke="#c0c4cc" stroke-width=".8"/><path d="M3 2.500l1-2" stroke="#c0c4cc" stroke-width=".8"/><path d="M5 2.500l1-2" stroke="#c0c4cc" stroke-width=".8"/><path d="M7 2.500l1-2" stroke="#c0c4cc" stroke-width=".8"/><path d="M9 2.500l1-2" stroke="#c0c4cc" stroke-width=".8"/><path d="M11 2.500l1-2" stroke="#c0c4cc" stroke-width=".8"/><path d="M13 2.500l1-2" stroke="#c0c4cc" stroke-width=".8"/><path d="M15 2.500l1-2" stroke="#c0c4cc" stroke-width=".8"/><path d="M17 2.500l1-2" stroke="#c0c4cc" stroke-width=".8"/><path d="M19 2.500l1-2" stroke="#c0c4cc" stroke-width=".8"/><path d="M21 2.500l1-2" stroke="#c0c4cc" stroke-width=".8"/><path d="M23 2.500l1-2" stroke="#c0c4cc" stroke-width=".8"/><path d="M25 2.500l1-2" stroke="#c0c4cc" stroke-width=".8"/></svg><!-- online db pane -->
<div class="a" style="left:3px;top:457px;width:849px;height:295px;background:#fff"></div>
<div class="hdr" style="left:3px;top:457px;width:849px;height:15.700px"></div>
<div class="t" style="left:6.2px;top:460.8px;height:12px;line-height:12px;color:#1c1c1c;letter-spacing:0.11px">Onlinedatenbank</div>
<svg style="left:825px;top:462px" width="24" height="7" viewBox="0 0 24 7"><path d="M1.500 1.500h7.500L5.250 5.500z" fill="#111"/><path d="M16.500.500l6 6M22.500.500l-6 6" stroke="#111" stroke-width="1.300" fill="none"/></svg>
<div class="a" style="left:4px;top:475.500px;width:83.500px;height:17.500px;border:1px solid #d4d4d4;background:#fdfdfd"></div>
<div class="t" style="left:7.4px;top:480.1px;height:12px;line-height:12px;color:#222;letter-spacing:0.07px">Zur Originalpartie</div>
<div class="a" style="left:345px;top:476px;width:149px;height:16.500px;border-right:1px solid #c9c9c9;border-bottom:1px solid #c9c9c9"></div>
<div class="t" style="left:381.9px;top:478.0px;height:14px;line-height:14px;font-size:12.3px;color:#3a3a3a;font-family:'Liberation Serif',serif;font-style:italic;letter-spacing:-0.20px;-webkit-text-stroke:0">4 Partien gefunden</div>
<div class="a" style="left:3px;top:496px;width:255px;height:19.500px;background:#f6f6f9;border-top:1px solid #e3e3e8;border-bottom:1px solid #e6e6ea"></div>
<div class="a" style="left:263px;top:496px;width:589px;height:19.500px;background:#f6f6f9;border-top:1px solid #e3e3e8;border-bottom:1px solid #e6e6ea"></div>
<div class="a" style="left:59.4px;top:497px;width:2px;height:18px;background:linear-gradient(90deg,#dcdce2 50%,#ffffff 50%)"></div>
<div class="a" style="left:106.2px;top:497px;width:2px;height:18px;background:linear-gradient(90deg,#dcdce2 50%,#ffffff 50%)"></div>
<div class="a" style="left:152.9px;top:497px;width:2px;height:18px;background:linear-gradient(90deg,#dcdce2 50%,#ffffff 50%)"></div>
<div class="a" style="left:199px;top:497px;width:2px;height:18px;background:linear-gradient(90deg,#dcdce2 50%,#ffffff 50%)"></div>
<div class="a" style="left:244.5px;top:497px;width:2px;height:18px;background:linear-gradient(90deg,#dcdce2 50%,#ffffff 50%)"></div>
<div class="a" style="left:343px;top:497px;width:2px;height:18px;background:linear-gradient(90deg,#dcdce2 50%,#ffffff 50%)"></div>
<div class="a" style="left:377.7px;top:497px;width:2px;height:18px;background:linear-gradient(90deg,#dcdce2 50%,#ffffff 50%)"></div>
<div class="a" style="left:459.3px;top:497px;width:2px;height:18px;background:linear-gradient(90deg,#dcdce2 50%,#ffffff 50%)"></div>
<div class="a" style="left:494.4px;top:497px;width:2px;height:18px;background:linear-gradient(90deg,#dcdce2 50%,#ffffff 50%)"></div>
<div class="a" style="left:542px;top:497px;width:2px;height:18px;background:linear-gradient(90deg,#dcdce2 50%,#ffffff 50%)"></div>
<div class="a" style="left:606px;top:497px;width:2px;height:18px;background:linear-gradient(90deg,#dcdce2 50%,#ffffff 50%)"></div>
<div class="a" style="left:773px;top:497px;width:2px;height:18px;background:linear-gradient(90deg,#dcdce2 50%,#ffffff 50%)"></div>
<div class="a" style="left:807px;top:497px;width:2px;height:18px;background:linear-gradient(90deg,#dcdce2 50%,#ffffff 50%)"></div>
<div class="a" style="left:836px;top:497px;width:2px;height:18px;background:linear-gradient(90deg,#dcdce2 50%,#ffffff 50%)"></div>
<div class="t" style="left:5.7px;top:501.7px;height:12px;line-height:12px;color:#3c3c3c;letter-spacing:-0.15px">Züge</div>
<div class="t" style="left:64.3px;top:501.7px;height:12px;line-height:12px;color:#3c3c3c;letter-spacing:-0.16px">Partien</div>
<div class="t" style="left:110.7px;top:501.7px;height:12px;line-height:12px;color:#3c3c3c;letter-spacing:-0.07px">Zugum...</div>
<div class="t" style="left:157.1px;top:501.7px;height:12px;line-height:12px;color:#3c3c3c;letter-spacing:0.02px">Punkte</div>
<div class="t" style="left:203.5px;top:501.7px;height:12px;line-height:12px;color:#3c3c3c;letter-spacing:-0.50px">Remisen</div>
<div class="t" style="left:266.1px;top:501.7px;height:12px;line-height:12px;color:#3c3c3c;letter-spacing:-0.20px">Weiß</div>
<div class="t" style="left:347.6px;top:501.7px;height:12px;line-height:12px;color:#3c3c3c;letter-spacing:-0.16px">Elo W</div>
<div class="t" style="left:382.7px;top:501.7px;height:12px;line-height:12px;color:#3c3c3c;letter-spacing:-0.45px">Schwarz</div>
<div class="t" style="left:464.4px;top:501.7px;height:12px;line-height:12px;color:#3c3c3c;letter-spacing:-0.68px">Elo S</div>
<div class="t" style="left:499.5px;top:501.7px;height:12px;line-height:12px;color:#3c3c3c;letter-spacing:-0.22px">Ergebnis</div>
<div class="t" style="left:546.8px;top:501.7px;height:12px;line-height:12px;color:#3c3c3c;letter-spacing:-0.49px">Jahr</div>
<div class="t" style="left:611.2px;top:501.7px;height:12px;line-height:12px;color:#3c3c3c;letter-spacing:0.24px">Notation</div>
<div class="t" style="left:777.8px;top:501.7px;height:12px;line-height:12px;color:#3c3c3c;letter-spacing:-1.78px">VCS</div>
<div class="t" style="left:811.4px;top:501.7px;height:12px;line-height:12px;color:#3c3c3c;letter-spacing:-1.42px">ECO</div>
<div class="t" style="left:840.8px;top:501.7px;height:12px;line-height:12px;color:#3c3c3c;letter-spacing:-0.84px">Th</div>
<div class="a" style="left:249px;top:499px;width:9px;height:14px;overflow:hidden"><div class="t" style="left:0.2px;top:2.7px;height:12px;line-height:12px;color:#3c3c3c">Ge</div></div>
<div class="a" style="left:258px;top:496px;width:5px;height:256px;background:#f2f2f5"></div>
<div class="a" style="left:262px;top:496px;width:1px;height:256px;background:#8f9095"></div>
<div class="a" style="left:154px;top:516.8px;width:46px;height:14.300px;background:linear-gradient(90deg,#e3efe3 8.5px,#f1e1e0 14.5px)"></div>
<div class="a" style="left:154px;top:531.0px;width:46px;height:14.300px;background:linear-gradient(90deg,#e3efe3 43.0px,#f1e1e0 49.0px)"></div>
<div class="a" style="left:154px;top:545.2px;width:46px;height:14.300px;background:linear-gradient(90deg,#e3efe3 20.0px,#f1e1e0 26.0px)"></div>
<div class="a" style="left:3px;top:516.200px;width:255px;height:1.200px;background:#4a98dc"></div>
<div class="a" style="left:3px;top:528.400px;width:255px;height:1.200px;background:#4a98dc"></div>
<div class="t" style="left:9.1px;top:519.0px;height:12px;line-height:12px;font-size:10.3px;color:#1a1a1a;letter-spacing:-0.61px">12.Lf1</div>
<div class="t" style="left:64.4px;top:519.0px;height:12px;line-height:12px;font-size:10.3px;color:#1a1a1a">2</div>
<div class="t" style="left:110.8px;top:519.0px;height:12px;line-height:12px;font-size:10.3px;color:#1a1a1a">0</div>
<div class="t" style="left:157.6px;top:519.0px;height:12px;line-height:12px;font-size:10.3px;color:#1a1a1a;letter-spacing:-0.83px">25.0%</div>
<div class="t" style="left:203.5px;top:519.0px;height:12px;line-height:12px;font-size:10.3px;color:#1a1a1a;letter-spacing:-0.83px">50.0%</div>
<div class="a" style="left:249px;top:516.3px;width:8.500px;height:14px;overflow:hidden"><div class="t" style="left:0.2px;top:2.7px;height:12px;line-height:12px;font-size:10.3px;color:#1a1a1a">190</div></div>
<div class="t" style="left:9.1px;top:533.2px;height:12px;line-height:12px;font-size:10.3px;color:#1a1a1a;letter-spacing:-0.56px">12.Lc4</div>
<div class="t" style="left:64.4px;top:533.2px;height:12px;line-height:12px;font-size:10.3px;color:#1a1a1a">1</div>
<div class="t" style="left:110.8px;top:533.2px;height:12px;line-height:12px;font-size:10.3px;color:#1a1a1a">0</div>
<div class="t" style="left:157.6px;top:533.2px;height:12px;line-height:12px;font-size:10.3px;color:#1a1a1a;letter-spacing:-0.79px">100.0%</div>
<div class="t" style="left:203.5px;top:533.2px;height:12px;line-height:12px;font-size:10.3px;color:#1a1a1a;letter-spacing:-0.89px">0.0%</div>
<div class="a" style="left:249px;top:530.5px;width:8.500px;height:14px;overflow:hidden"><div class="t" style="left:0.2px;top:2.7px;height:12px;line-height:12px;font-size:10.3px;color:#1a1a1a">200</div></div>
<div class="t" style="left:9.1px;top:547.4px;height:12px;line-height:12px;font-size:10.3px;color:#1a1a1a;letter-spacing:-0.77px">12.Sa2</div>
<div class="t" style="left:64.4px;top:547.4px;height:12px;line-height:12px;font-size:10.3px;color:#1a1a1a">1</div>
<div class="t" style="left:110.8px;top:547.4px;height:12px;line-height:12px;font-size:10.3px;color:#1a1a1a">0</div>
<div class="t" style="left:157.6px;top:547.4px;height:12px;line-height:12px;font-size:10.3px;color:#1a1a1a;letter-spacing:-0.83px">50.0%</div>
<div class="t" style="left:203.5px;top:547.4px;height:12px;line-height:12px;font-size:10.3px;color:#1a1a1a;letter-spacing:-0.81px">100.0%</div>
<div class="a" style="left:249px;top:544.7px;width:8.500px;height:14px;overflow:hidden"><div class="t" style="left:0.2px;top:2.7px;height:12px;line-height:12px;font-size:10.3px;color:#1a1a1a">200</div></div>
<div class="t" style="left:269.4px;top:518.7px;height:12px;line-height:12px;font-size:10.3px;color:#1a1a1a;letter-spacing:-0.17px">Siikaluoma,A</div>
<div class="t" style="left:344.2px;top:518.7px;height:12px;line-height:12px;font-size:10.3px;color:#1a1a1a;letter-spacing:-0.87px">2496</div>
<div class="t" style="left:382.7px;top:518.7px;height:12px;line-height:12px;font-size:10.3px;color:#1a1a1a;letter-spacing:-0.48px">Serner,A</div>
<div class="t" style="left:460.7px;top:518.7px;height:12px;line-height:12px;font-size:10.3px;color:#1a1a1a;letter-spacing:-1.07px">2481</div>
<div class="t" style="left:499.5px;top:518.7px;height:12px;line-height:12px;font-size:10.3px;color:#1a1a1a;letter-spacing:-0.30px">1-0</div>
<div class="t" style="left:546.8px;top:518.7px;height:12px;line-height:12px;font-size:10.3px;color:#1a1a1a;letter-spacing:-0.85px">2011</div>
<div class="t" style="left:611.2px;top:518.7px;height:12px;line-height:12px;font-size:10.3px;color:#1a1a1a;letter-spacing:-0.57px">12.Lc4 e6 13.e5 dxe5 14.Sxe5 f6 15.Sf..</div>
<div class="t" style="left:811.4px;top:518.7px;height:12px;line-height:12px;font-size:10.3px;color:#1a1a1a;letter-spacing:-0.16px">B08</div>
<div class="a" style="left:843px;top:518.3px;width:9px;height:9px;border-radius:50%;background:#d9d9d9"></div>
<div class="t" style="left:269.4px;top:532.8px;height:12px;line-height:12px;font-size:10.3px;color:#1a1a1a;letter-spacing:-0.25px">Bogdanov,A</div>
<div class="t" style="left:344.2px;top:532.8px;height:12px;line-height:12px;font-size:10.3px;color:#1a1a1a;letter-spacing:-0.87px">2039</div>
<div class="t" style="left:382.7px;top:532.8px;height:12px;line-height:12px;font-size:10.3px;color:#1a1a1a;letter-spacing:-0.04px">Markovic,M</div>
<div class="t" style="left:460.7px;top:532.8px;height:12px;line-height:12px;font-size:10.3px;color:#1a1a1a;letter-spacing:-1.07px">2286</div>
<div class="t" style="left:499.5px;top:532.8px;height:12px;line-height:12px;font-size:10.3px;color:#1a1a1a;letter-spacing:0.75px">½-½</div>
<div class="t" style="left:546.8px;top:532.8px;height:12px;line-height:12px;font-size:10.3px;color:#1a1a1a;letter-spacing:-1.11px">2022</div>
<div class="t" style="left:611.2px;top:532.8px;height:12px;line-height:12px;font-size:10.3px;color:#1a1a1a;letter-spacing:-0.69px">12.Sa2 Sxa2 13.Txa2 f6 14.Ta1 Sf4 15...</div>
<div class="t" style="left:811.4px;top:532.8px;height:12px;line-height:12px;font-size:10.3px;color:#1a1a1a;letter-spacing:-0.16px">B08</div>
<div class="a" style="left:843px;top:532.4px;width:9px;height:9px;border-radius:50%;background:#d9d9d9"></div>
<div class="t" style="left:269.4px;top:547.0px;height:12px;line-height:12px;font-size:10.3px;color:#1a1a1a;letter-spacing:-0.25px">Shishkin,V</div>
<div class="t" style="left:382.7px;top:547.0px;height:12px;line-height:12px;font-size:10.3px;color:#1a1a1a;letter-spacing:-0.27px">Zinchenko,Y</div>
<div class="t" style="left:499.5px;top:547.0px;height:12px;line-height:12px;font-size:10.3px;color:#1a1a1a;letter-spacing:-0.30px">0-1</div>
<div class="t" style="left:546.8px;top:547.0px;height:12px;line-height:12px;font-size:10.3px;color:#1a1a1a;letter-spacing:-1.11px">1991</div>
<div class="t" style="left:611.2px;top:547.0px;height:12px;line-height:12px;font-size:10.3px;color:#1a1a1a;letter-spacing:-0.64px">12.Lf1 Sf4 13.Se2 Sxe2+ 14.Lxe2 Sa6..</div>
<div class="t" style="left:811.4px;top:547.0px;height:12px;line-height:12px;font-size:10.3px;color:#1a1a1a;letter-spacing:-0.16px">B08</div>
<div class="a" style="left:843px;top:546.5999999999999px;width:9px;height:9px;border-radius:50%;background:#f3f3f3"></div>
<div class="t" style="left:269.4px;top:561.1px;height:12px;line-height:12px;font-size:10.3px;color:#1a1a1a;letter-spacing:-0.54px">Barczay,L</div>
<div class="t" style="left:382.7px;top:561.1px;height:12px;line-height:12px;font-size:10.3px;color:#1a1a1a;letter-spacing:-0.73px">Haag,E</div>
<div class="t" style="left:499.5px;top:561.1px;height:12px;line-height:12px;font-size:10.3px;color:#1a1a1a;letter-spacing:0.75px">½-½</div>
<div class="t" style="left:546.8px;top:561.1px;height:12px;line-height:12px;font-size:10.3px;color:#1a1a1a;letter-spacing:-1.11px">1965</div>
<div class="t" style="left:611.2px;top:561.1px;height:12px;line-height:12px;font-size:10.3px;color:#1a1a1a;letter-spacing:-0.60px">12.Lf1 Sf4 13.Se2 Sxe2+ 14.Dxe2 Ld7..</div>
<div class="t" style="left:811.4px;top:561.1px;height:12px;line-height:12px;font-size:10.3px;color:#1a1a1a;letter-spacing:-0.16px">B08</div>
<div class="a" style="left:843px;top:560.6999999999999px;width:9px;height:9px;border-radius:50%;background:#f3f3f3"></div>
<div class="a" style="left:3px;top:742px;width:255px;height:10px;background:#f0f0f0"></div>
<div class="a" style="left:17.300px;top:742px;width:192.300px;height:10px;background:#cdcdcd"></div>
<div class="a" style="left:263px;top:742px;width:589px;height:10px;background:#f0f0f0"></div>
<div class="a" style="left:277px;top:742px;width:432.700px;height:10px;background:#cdcdcd"></div>
<svg style="left:7px;top:744px" width="5" height="7" viewBox="0 0 5 7"><path d="M4 .5L1 3.500l3 3" fill="none" stroke="#444" stroke-width="1.300"/></svg>
<svg style="left:248.5px;top:744px" width="5" height="7" viewBox="0 0 5 7"><path d="M1 .5l3 3-3 3" fill="none" stroke="#444" stroke-width="1.300"/></svg>
<svg style="left:268.5px;top:744px" width="5" height="7" viewBox="0 0 5 7"><path d="M4 .5L1 3.500l3 3" fill="none" stroke="#444" stroke-width="1.300"/></svg>
<svg style="left:842.5px;top:744px" width="5" height="7" viewBox="0 0 5 7"><path d="M1 .5l3 3-3 3" fill="none" stroke="#444" stroke-width="1.300"/></svg>
<div class="a" style="left:852px;top:120px;width:5px;height:632px;background:#f4f4f8"></div><!-- notation pane -->
<div class="a" style="left:857px;top:120px;width:740px;height:632px;background:#fff"></div>
<div class="a" style="left:857.200px;top:120px;width:1.200px;height:632px;background:#96989e"></div>
<div class="a" style="left:1597px;top:120px;width:3px;height:632px;background:linear-gradient(90deg,#f4f4f8,#dcdde3 50%,#f4f4f8)"></div>
<div class="hdr" style="left:858px;top:119.500px;width:739px;height:16.500px"></div>
<div class="t" style="left:860.8px;top:123.7px;height:12px;line-height:12px;color:#1c1c1c;letter-spacing:0.06px">Notation + Buch</div>
<svg style="left:1572px;top:125px" width="22" height="7" viewBox="0 0 22 7"><path d="M0 1.800h7.400L3.700 5.800z" fill="#111"/><path d="M14.300.600l5.800 5.800M20.100.600l-5.800 5.800" stroke="#111" stroke-width="1.300" fill="none"/></svg>
<div class="a" style="left:858px;top:155px;width:739px;height:1px;background:#d9d9de"></div>
<div class="a" style="left:859px;top:138px;width:49.500px;height:18px;background:#fff;border:1px solid #d9d9de;border-bottom:none"></div>
<div class="t" style="left:864.2px;top:143.0px;height:12px;line-height:12px;color:#2d6da8;letter-spacing:0.43px">Notation</div>
<div class="t" style="left:913.3px;top:143.0px;height:12px;line-height:12px;color:#262626;letter-spacing:-0.24px">Referenz</div>
<div class="t" style="left:960.7px;top:143.0px;height:12px;line-height:12px;color:#262626;letter-spacing:0.18px">Nachspieltraining</div>
<div class="t" style="left:1048.3px;top:143.0px;height:12px;line-height:12px;color:#262626;letter-spacing:-0.08px">Plan Explorer</div>
<div class="t" style="left:1116.2px;top:143.0px;height:12px;line-height:12px;color:#262626;letter-spacing:-0.14px">Tabelle</div>
<div class="t" style="left:1155.7px;top:143.0px;height:12px;line-height:12px;color:#262626;letter-spacing:0.16px">Formular</div>
<div class="t" style="left:1205.8px;top:143.0px;height:12px;line-height:12px;color:#262626;letter-spacing:-0.06px">LiveBuch</div>
<div class="t" style="left:1256.1px;top:143.0px;height:12px;line-height:12px;color:#262626;letter-spacing:0.09px">Buch</div>
<div class="t" style="left:1295.8px;top:143.0px;height:12px;line-height:12px;color:#262626;letter-spacing:0.14px">Meine Züge</div>
<div class="t" style="left:1358.0px;top:143.0px;height:12px;line-height:12px;color:#262626;letter-spacing:0.06px">Übersichten</div>
<div class="t" style="left:1162.0px;top:162.7px;height:15px;line-height:15px;font-size:12.5px;font-weight:bold;-webkit-text-stroke:0;color:#1b1b1b;letter-spacing:0.24px">Neue Partie eingeben</div>
<div class="a" style="left:858px;top:200.400px;width:739px;height:1px;background:#3a3a76"></div>
<div class="t" style="left:861.1px;top:212.4px;height:15px;line-height:15px;font-size:13px;font-weight:bold;-webkit-text-stroke:0;color:#161616;letter-spacing:-0.84px">1.e4</div>
<div class="t" style="left:890.8px;top:212.4px;height:15px;line-height:15px;font-size:13px;font-weight:bold;-webkit-text-stroke:0;color:#161616;letter-spacing:0.43px">d6</div>
<div class="t" style="left:913.3px;top:212.4px;height:15px;line-height:15px;font-size:13px;font-weight:bold;-webkit-text-stroke:0;color:#161616;letter-spacing:0.26px">2.d4</div>
<div class="t" style="left:946.6px;top:212.4px;height:15px;line-height:15px;font-size:13px;font-weight:bold;-webkit-text-stroke:0;color:#161616;letter-spacing:-0.07px">Sf6</div>
<div class="t" style="left:973.3px;top:212.4px;height:15px;line-height:15px;font-size:13px;font-weight:bold;-webkit-text-stroke:0;color:#161616;letter-spacing:-0.47px">3.Sc3</div>
<div class="t" style="left:1012.3px;top:212.4px;height:15px;line-height:15px;font-size:13px;font-weight:bold;-webkit-text-stroke:0;color:#161616;letter-spacing:0.43px">g6</div>
<div class="t" style="left:1034.8px;top:212.4px;height:15px;line-height:15px;font-size:13px;font-weight:bold;-webkit-text-stroke:0;color:#161616;letter-spacing:-0.32px">4.Sf3</div>
<div class="t" style="left:1072.3px;top:212.4px;height:15px;line-height:15px;font-size:13px;font-weight:bold;-webkit-text-stroke:0;color:#161616;letter-spacing:-0.76px">Lg7</div>
<div class="t" style="left:1101.8px;top:212.4px;height:15px;line-height:15px;font-size:13px;font-weight:bold;-webkit-text-stroke:0;color:#161616;letter-spacing:-0.36px">5.Le2</div>
<div class="t" style="left:1141.0px;top:212.4px;height:15px;line-height:15px;font-size:13px;font-weight:bold;-webkit-text-stroke:0;color:#161616;letter-spacing:0.30px">0-0</div>
<div class="t" style="left:1167.8px;top:212.4px;height:15px;line-height:15px;font-size:13px;font-weight:bold;-webkit-text-stroke:0;color:#161616;letter-spacing:0.24px">6.0-0</div>
<div class="t" style="left:1205.3px;top:212.4px;height:15px;line-height:15px;font-size:13px;font-weight:bold;-webkit-text-stroke:0;color:#161616;letter-spacing:-0.67px">c6</div>
<div class="t" style="left:1226.0px;top:212.4px;height:15px;line-height:15px;font-size:13px;font-weight:bold;-webkit-text-stroke:0;color:#161616;letter-spacing:-0.30px">7.a4</div>
<div class="t" style="left:1257.8px;top:212.4px;height:15px;line-height:15px;font-size:13px;font-weight:bold;-webkit-text-stroke:0;color:#161616;letter-spacing:-1.17px">a5</div>
<div class="t" style="left:1278.5px;top:212.4px;height:15px;line-height:15px;font-size:13px;font-weight:bold;-webkit-text-stroke:0;color:#161616;letter-spacing:-0.31px">8.h3</div>
<div class="t" style="left:874.6px;top:233.3px;height:15px;line-height:15px;font-size:12px;color:#333">[</div>
<div class="a" style="left:881.700px;top:234.2px;width:13.500px;height:12.400px;border-radius:2.500px;background:linear-gradient(#b5cc5e,#8fae3c);border:1px solid #a9c352;box-shadow:inset 0 0 0 .5px rgba(255,255,255,.25)"></div>
<div class="a" style="left:885px;top:239.5px;width:7px;height:2.200px;background:#23300a;border-radius:.5px"></div>
<div class="t" style="left:901.6px;top:233.1px;height:15px;line-height:15px;font-size:12.8px;color:#1d1d1d;letter-spacing:-0.26px">8.Le3</div>
<div class="a" style="left:901.500px;top:247.7px;width:31.200000000000045px;height:1px;background:#2a2a2a"></div>
<div class="t" style="left:939.6px;top:233.1px;height:15px;line-height:15px;font-size:12.8px;color:#1d1d1d;letter-spacing:-0.99px">Sa6</div>
<div class="t" style="left:967.6px;top:233.1px;height:15px;line-height:15px;font-size:12.8px;color:#1d1d1d;letter-spacing:-0.21px">9.h3</div>
<div class="t" style="left:999.1px;top:233.1px;height:15px;line-height:15px;font-size:12.8px;color:#1d1d1d;letter-spacing:-0.39px">Sb4</div>
<div class="t" style="left:1029.6px;top:233.1px;height:15px;line-height:15px;font-size:12.8px;color:#1d1d1d;letter-spacing:-0.25px">10.Dd2</div>
<div class="t" style="left:1073.6px;top:233.3px;height:15px;line-height:15px;font-size:12px;color:#333">]</div>
<div class="t" style="left:874.6px;top:254.0px;height:15px;line-height:15px;font-size:12px;color:#333">[</div>
<div class="a" style="left:881.700px;top:254.89999999999998px;width:13.500px;height:12.400px;border-radius:2.500px;background:linear-gradient(#b5cc5e,#8fae3c);border:1px solid #a9c352;box-shadow:inset 0 0 0 .5px rgba(255,255,255,.25)"></div>
<div class="a" style="left:885px;top:260.2px;width:7px;height:2.200px;background:#23300a;border-radius:.5px"></div>
<div class="t" style="left:901.6px;top:253.8px;height:15px;line-height:15px;font-size:12.8px;color:#1d1d1d;letter-spacing:-0.04px">8.Lf4</div>
<div class="a" style="left:901.500px;top:268.4px;width:28.5px;height:1px;background:#2a2a2a"></div>
<div class="t" style="left:936.9px;top:253.8px;height:15px;line-height:15px;font-size:12.8px;color:#1d1d1d;letter-spacing:-0.99px">Sa6</div>
<div class="t" style="left:964.9px;top:253.8px;height:15px;line-height:15px;font-size:12.8px;color:#1d1d1d;letter-spacing:-0.21px">9.h3</div>
<div class="t" style="left:996.4px;top:253.8px;height:15px;line-height:15px;font-size:12.8px;color:#1d1d1d;letter-spacing:-0.39px">Sb4</div>
<div class="t" style="left:1026.9px;top:253.8px;height:15px;line-height:15px;font-size:12.8px;color:#1d1d1d;letter-spacing:-0.19px">10.Dd2</div>
<div class="t" style="left:1071.6px;top:254.0px;height:15px;line-height:15px;font-size:12px;color:#333">]</div>
<div class="t" style="left:874.6px;top:274.6px;height:15px;line-height:15px;font-size:12px;color:#333">[</div>
<div class="a" style="left:881.700px;top:275.5px;width:13.500px;height:12.400px;border-radius:2.500px;background:linear-gradient(#b5cc5e,#8fae3c);border:1px solid #a9c352;box-shadow:inset 0 0 0 .5px rgba(255,255,255,.25)"></div>
<div class="a" style="left:885px;top:280.8px;width:7px;height:2.200px;background:#23300a;border-radius:.5px"></div>
<div class="t" style="left:901.6px;top:274.4px;height:15px;line-height:15px;font-size:12.8px;color:#1d1d1d;letter-spacing:-0.63px">8.Te1</div>
<div class="a" style="left:901.500px;top:289.0px;width:29.0px;height:1px;background:#2a2a2a"></div>
<div class="t" style="left:937.6px;top:274.4px;height:15px;line-height:15px;font-size:12.8px;color:#1d1d1d;letter-spacing:-0.99px">Sa6</div>
<div class="t" style="left:965.6px;top:274.4px;height:15px;line-height:15px;font-size:12.8px;color:#1d1d1d;letter-spacing:-0.21px">9.h3</div>
<div class="t" style="left:997.1px;top:274.4px;height:15px;line-height:15px;font-size:12.8px;color:#1d1d1d;letter-spacing:-0.39px">Sb4</div>
<div class="t" style="left:1027.6px;top:274.4px;height:15px;line-height:15px;font-size:12.8px;color:#1d1d1d;letter-spacing:-0.22px">10.Lf4</div>
<div class="t" style="left:1066.4px;top:274.6px;height:15px;line-height:15px;font-size:12px;color:#333">]</div>
<div class="t" style="left:861.1px;top:296.1px;height:15px;line-height:15px;font-size:13px;font-weight:bold;-webkit-text-stroke:0;color:#161616;letter-spacing:-0.45px">8...Sa6</div>
<div class="t" style="left:906.8px;top:296.1px;height:15px;line-height:15px;font-size:13px;font-weight:bold;-webkit-text-stroke:0;color:#161616;letter-spacing:-0.29px">9.Le3</div>
<div class="a" style="left:898.500px;top:314px;width:35px;height:18.300px;background:#dbe7f7"></div>
<div class="t" style="left:874.6px;top:316.2px;height:15px;line-height:15px;font-size:12px;color:#333">[</div>
<div class="a" style="left:881.700px;top:317.09999999999997px;width:13.500px;height:12.400px;border-radius:2.500px;background:linear-gradient(#b5cc5e,#8fae3c);border:1px solid #a9c352;box-shadow:inset 0 0 0 .5px rgba(255,255,255,.25)"></div>
<div class="a" style="left:885px;top:322.4px;width:7px;height:2.200px;background:#23300a;border-radius:.5px"></div>
<div class="t" style="left:901.6px;top:316.0px;height:15px;line-height:15px;font-size:12.8px;color:#1d1d1d;letter-spacing:-0.02px">9.Lf4</div>
<div class="a" style="left:901.500px;top:330.59999999999997px;width:28.600000000000023px;height:1px;background:#2a2a2a"></div>
<div class="t" style="left:936.6px;top:316.0px;height:15px;line-height:15px;font-size:12.8px;color:#1d1d1d;letter-spacing:-0.34px">Sb4</div>
<div class="t" style="left:967.0px;top:316.0px;height:15px;line-height:15px;font-size:12.8px;color:#1d1d1d;letter-spacing:-0.29px">10.Dd2</div>
<div class="t" style="left:1014.6px;top:316.0px;height:15px;line-height:15px;font-size:12.8px;color:#1d1d1d;letter-spacing:0.06px">Db6</div>
<div class="t" style="left:1041.6px;top:316.2px;height:15px;line-height:15px;font-size:12px;color:#333">]</div>
<div class="a" style="left:898.500px;top:334.200px;width:35px;height:20px;background:#dbe7f7"></div>
<div class="a" style="left:933.500px;top:334.200px;width:147.500px;height:20px;background:#fdfcdc"></div>
<div class="a" style="left:1081px;top:334.200px;width:27.200px;height:20.300px;background:#0b0b3a"></div>
<div class="t" style="left:874.6px;top:336.8px;height:15px;line-height:15px;font-size:12px;color:#333">[</div>
<div class="a" style="left:881.700px;top:337.7px;width:13.500px;height:12.400px;border-radius:2.500px;background:linear-gradient(#b5cc5e,#8fae3c);border:1px solid #a9c352;box-shadow:inset 0 0 0 .5px rgba(255,255,255,.25)"></div>
<div class="a" style="left:885px;top:343px;width:7px;height:2.200px;background:#23300a;border-radius:.5px"></div>
<div class="t" style="left:901.6px;top:336.6px;height:15px;line-height:15px;font-size:12.8px;color:#1d1d1d;letter-spacing:-0.60px">9.Te1</div>
<div class="a" style="left:901.500px;top:351.2px;width:29.100000000000023px;height:1px;background:#2a2a2a"></div>
<div class="t" style="left:937.5px;top:336.6px;height:15px;line-height:15px;font-size:12.8px;color:#1d1d1d;letter-spacing:-0.29px">Sb4</div>
<div class="t" style="left:967.5px;top:336.6px;height:15px;line-height:15px;font-size:12.8px;color:#1d1d1d;letter-spacing:-0.24px">10.Lf4</div>
<div class="t" style="left:1009.5px;top:336.6px;height:15px;line-height:15px;font-size:12.8px;color:#1d1d1d;letter-spacing:-0.54px">Sh5</div>
<div class="t" style="left:1039.6px;top:336.6px;height:15px;line-height:15px;font-size:12.8px;color:#1d1d1d;letter-spacing:-0.20px">11.Lh2</div>
<div class="t" style="left:1109.2px;top:336.8px;height:15px;line-height:15px;font-size:12px;color:#333">]</div>
<div class="t" style="left:1084.6px;top:336.6px;height:15px;line-height:15px;font-size:12.8px;color:#ffffff;letter-spacing:-0.23px;-webkit-text-stroke:.1px #fff">Lh6</div>
<div class="t" style="left:861.1px;top:358.2px;height:15px;line-height:15px;font-size:13px;font-weight:bold;-webkit-text-stroke:0;color:#161616;letter-spacing:-0.29px">9...Sb4</div>
<div class="t" style="left:908.8px;top:358.2px;height:15px;line-height:15px;font-size:13px;font-weight:bold;-webkit-text-stroke:0;color:#161616;letter-spacing:-0.65px">10.Dd2</div>
<div class="t" style="left:956.0px;top:358.2px;height:15px;line-height:15px;font-size:13px;font-weight:bold;-webkit-text-stroke:0;color:#161616;letter-spacing:-0.83px">Dc7</div>
<div class="t" style="left:986.1px;top:358.2px;height:15px;line-height:15px;font-size:13px;font-weight:bold;-webkit-text-stroke:0;color:#161616;letter-spacing:-1.23px">11.Lh6</div>
<div class="t" style="left:1028.3px;top:358.2px;height:15px;line-height:15px;font-size:13px;font-weight:bold;-webkit-text-stroke:0;color:#161616;letter-spacing:-1.16px">Ld7</div>
<div class="t" style="left:1057.0px;top:358.2px;height:15px;line-height:15px;font-size:13px;font-weight:bold;-webkit-text-stroke:0;color:#161616;letter-spacing:-1.13px">12.Tac1</div>
<svg style="left:1565px;top:207px" width="8" height="4" viewBox="0 0 8 4"><path d="M0 4L3.700 0 7.400 4z" fill="#8d8d95"/></svg>
<div class="a" style="left:1565.300px;top:216px;width:6.600px;height:13.500px;background:#c9c9d9"></div>
<svg style="left:1565px;top:638.500px" width="8" height="4" viewBox="0 0 8 4"><path d="M0 0L3.700 4 7.400 0z" fill="#8d8d95"/></svg>
<div class="a" style="left:1575.100px;top:201px;width:1.550px;height:475px;background:#0c0c0c"></div>
<div class="a" style="left:858px;top:654.500px;width:718px;height:1.500px;background:#0c0c0c"></div>
<div class="a" style="left:858px;top:675.100px;width:739px;height:1.500px;background:#0c0c0c"></div>
<svg style="left:1579.500px;top:205.500px" width="14" height="14" viewBox="0 0 14 14"><g fill="none" stroke="#2b2b2b" stroke-width="1.800" stroke-linejoin="round" stroke-linecap="round"><path d="M1.200 6.900h11.600M4 4.200L1.200 6.900l2.800 2.700M10.400 4.300l2.700 2.600-2.700 2.600M2.800 6.300L6.600 2.800M2.800 7.500L6 10.800"/></g><rect x="5.600" y="1" width="2.800" height="2.800" fill="#2b2b2b"/><rect x="6.100" y="10.200" width="3.900" height="3.200" fill="#d42a1c"/><rect x="10" y="10.200" width="3.900" height="3.200" fill="#3cb03c"/></svg>
<svg style="left:1579.500px;top:224px" width="14" height="14" viewBox="-7 -7 14 14"><g transform="rotate(0)"><circle cx="0" cy="-2.700" r="1.450" fill="#2b2b2b"/><path d="M.6-3.600C1.800-5.800 3.600-6.200 5.600-5" fill="none" stroke="#2b2b2b" stroke-width="1.300" stroke-linecap="round"/></g><g transform="rotate(90)"><circle cx="0" cy="-2.700" r="1.450" fill="#2b2b2b"/><path d="M.6-3.600C1.800-5.800 3.600-6.200 5.600-5" fill="none" stroke="#2b2b2b" stroke-width="1.300" stroke-linecap="round"/></g><g transform="rotate(180)"><circle cx="0" cy="-2.700" r="1.450" fill="#2b2b2b"/><path d="M.6-3.600C1.800-5.800 3.600-6.200 5.600-5" fill="none" stroke="#2b2b2b" stroke-width="1.300" stroke-linecap="round"/></g><g transform="rotate(270)"><circle cx="0" cy="-2.700" r="1.450" fill="#2b2b2b"/><path d="M.6-3.600C1.800-5.800 3.600-6.200 5.600-5" fill="none" stroke="#2b2b2b" stroke-width="1.300" stroke-linecap="round"/></g></svg>
<svg style="left:1579.500px;top:242.500px" width="14" height="14" viewBox="0 0 14 14"><g fill="none" stroke="#2b2b2b" stroke-width="1.800" stroke-linejoin="round" stroke-linecap="round"><path d="M1.200 6.900h11.600M4 4.200L1.200 6.900l2.800 2.700M10.400 4.300l2.700 2.600-2.700 2.600M2.800 6.300L6.600 2.800M2.800 7.500L6 11"/></g><rect x="5.600" y="1" width="2.800" height="2.800" fill="#2b2b2b"/><rect x="5" y="10.200" width="2.800" height="2.800" fill="#2b2b2b"/></svg>
<svg style="left:1580.500px;top:261px" width="13" height="14" viewBox="0 0 13 14"><path d="M3.200 7.200A4.300 4.300 0 1 0 8.300 4.800L5 1.200" fill="none" stroke="#2b2b2b" stroke-width="2" stroke-linecap="round"/><path d="M3.600.800h3.600" stroke="#2b2b2b" stroke-width="1.600" stroke-linecap="round"/></svg>
<div class="t" style="left:1579.4px;top:280.3px;height:14px;line-height:14px;font-size:11.5px;font-weight:bold;-webkit-text-stroke:0;color:#1a1a1a;letter-spacing:-0.40px">Aa</div>
<svg style="left:1579.500px;top:296.500px" width="14" height="15" viewBox="0 0 14 15"><g fill="#fff" stroke="#2b2b2b" stroke-width="1.200"><path d="M4 4.500v7.300h4M4 7.300h4.500" fill="none"/><ellipse cx="3.800" cy="2.600" rx="2.900" ry="2"/><ellipse cx="10.300" cy="6.800" rx="2.900" ry="2"/><ellipse cx="9.800" cy="12" rx="2.900" ry="2"/></g></svg>
<svg style="left:1579.500px;top:315.500px" width="14" height="14" viewBox="0 0 14 14"><path d="M.8 8.500L9.800.6l2.600 1.800L6 11.800z" fill="#7d8088" stroke="#4a4d55" stroke-width=".8"/><path d="M3.500 8.300l6.800-6M5 9.600l6.400-6.400" stroke="#c7c9cf" stroke-width=".8"/><path d="M.8 8.500L6 11.800l-1.500 1z" fill="#44464c"/><rect x="6.300" y="10.300" width="3.600" height="3" fill="#d42a1c"/><rect x="9.900" y="10.300" width="3.600" height="3" fill="#3aa83a"/></svg>
<svg style="left:1580px;top:334px" width="13" height="13" viewBox="0 0 13 13"><rect width="13" height="13" fill="#a07a58"/><rect width="6.500" height="6.500" fill="#d9b48a"/><rect x="6.500" y="6.500" width="6.500" height="6.500" fill="#c9a074"/><rect x="6.500" width="6.500" height="6.500" fill="#8a5f40"/><g fill="#3a2a20"><path d="M2 6l.7-3.200h-.9V1.300h2.800v1.500h-.8L4.500 6z"/><path d="M2.200 12.500l.8-3.300a1 1 0 1 1 1 0l.8 3.300z"/><path d="M8.600 12.500l.8-3.300a1 1 0 1 1 1 0l.8 3.300z"/></g><path d="M8.300 5.800l1-3.600 1.400.4 1 3.200z" fill="#5b3c28"/></svg>
<svg style="left:1579.500px;top:352.500px" width="14" height="13" viewBox="0 0 14 13"><path d="M.8 8.300L8.600 1.600l4.600 2.400L5.800 11.600z" fill="#8fa6dc" stroke="#5b72b4" stroke-width=".8" stroke-linejoin="round"/><path d="M8.600 1.600l4.600 2.400-2.300 2.400-4.900-2.500z" fill="#f0c4cc" stroke="#c98d9a" stroke-width=".6"/><path d="M.8 8.300l5 3.300" stroke="#dfe6f8" stroke-width="1"/></svg>
<div class="a" style="left:1580px;top:371px;width:13.300px;height:13.300px;background:#ee1d25"></div>
<svg style="left:0;top:0" width="1600" height="752" viewBox="0 0 1600 752"><defs><linearGradient id="gg" x1="0" y1="0" x2="0" y2="1"><stop offset="0" stop-color="#2a8a2a"/><stop offset="1" stop-color="#176a17"/></linearGradient></defs><path d="M866 735.600H1597" stroke="#cfcfd4" stroke-width="1"/><g fill="url(#gg)"><path d="M866.30 706.3V705.00H883.81V703.80H901.32V700.30H918.83V695.30H936.34V698.80H953.85V699.60H971.36V699.60H988.87V688.30H1006.38V698.80H1023.89V698.80H1041.40V698.10H1058.91V697.10H1076.42V697.10H1093.93V694.30H1111.44V695.10H1128.95V699.60H1146.46V695.10H1163.97V694.30H1181.48V694.30H1198.99V695.80H1216.50V695.10H1234.01V698.60H1251.52V693.80H1269.03V691.30H1286.54V706.3z"/></g><path d="M866.300 685.500V727.800" stroke="#222" stroke-width="1.100"/><path d="M866.300 706.3H1584" stroke="#333" stroke-width=".9"/><g stroke="#333" stroke-width=".9"><path d="M917.5 706.3v2.600"/><path d="M987.6 706.3v2.600"/><path d="M1057.7 706.3v2.600"/><path d="M1127.8 706.3v2.600"/><path d="M1197.9 706.3v2.600"/><path d="M1268.0 706.3v2.600"/><path d="M1338.1 704.0999999999999v4.600"/><path d="M1408.2 704.0999999999999v4.600"/><path d="M1478.3 704.0999999999999v4.600"/></g><path d="M1248.900 678.300h4.800l-2.400 3.800z" fill="#1f2fd0"/><g fill="#fffde2" stroke="#222" stroke-width=".9"><rect x="1588.300" y="685.600" width="5" height="42"/></g><rect x="1588.800" y="719.600" width="4" height="7.500" fill="#5fe0ee"/><path d="M1588.300 694h5M1588.300 702.400h5M1588.300 710.800h5M1588.300 719.200h5" stroke="#222" stroke-width=".8"/></svg>
<div class="t" style="left:860.6px;top:683.6px;height:8px;line-height:8px;font-size:6.5px;color:#7a7a7a">1</div>
<div class="t" style="left:857.9px;top:725.3px;height:8px;line-height:8px;font-size:6.5px;color:#7a7a7a">-1</div>
<div class="t" style="left:915.6px;top:728.3px;height:8px;line-height:8px;font-size:6.5px;color:#7a7a7a">2</div>
<div class="t" style="left:985.7px;top:728.3px;height:8px;line-height:8px;font-size:6.5px;color:#7a7a7a">4</div>
<div class="t" style="left:1055.8px;top:728.3px;height:8px;line-height:8px;font-size:6.5px;color:#7a7a7a">6</div>
<div class="t" style="left:1125.9px;top:728.3px;height:8px;line-height:8px;font-size:6.5px;color:#7a7a7a">8</div>
<div class="t" style="left:1194.2px;top:728.3px;height:8px;line-height:8px;font-size:6.5px;color:#7a7a7a">10</div>
<div class="t" style="left:1264.3px;top:728.3px;height:8px;line-height:8px;font-size:6.5px;color:#7a7a7a">12</div>
<div class="t" style="left:1334.4px;top:728.3px;height:8px;line-height:8px;font-size:6.5px;color:#7a7a7a">14</div>
<div class="t" style="left:1404.5px;top:728.3px;height:8px;line-height:8px;font-size:6.5px;color:#7a7a7a">16</div>
<div class="t" style="left:1474.6px;top:728.3px;height:8px;line-height:8px;font-size:6.5px;color:#7a7a7a">18</div>
<svg style="left:858.500px;top:738px" width="4" height="14" viewBox="0 0 4 14"><rect x="1" y="1.0" width="1.200" height="1.200" fill="#b9b9c2"/><rect x="1" y="3.5" width="1.200" height="1.200" fill="#b9b9c2"/><rect x="1" y="6.0" width="1.200" height="1.200" fill="#b9b9c2"/><rect x="1" y="8.5" width="1.200" height="1.200" fill="#b9b9c2"/><rect x="1" y="11.0" width="1.200" height="1.200" fill="#b9b9c2"/><rect x="1" y="13.5" width="1.200" height="1.200" fill="#b9b9c2"/></svg>
<svg style="left:872.300px;top:740px" width="6.400" height="12" viewBox="0 0 8 12" preserveAspectRatio="none"><path d="M4 .300L.3 4.600h2.300v7.400h2.800V4.600h2.300z" fill="#1b7d2b" stroke="#0f5a1c" stroke-width=".5"/></svg>
<svg style="left:892px;top:740px" width="12" height="12" viewBox="0 0 12 12"><path d="M1.500 1.500l8 9M9.500 1.500l-8 9" stroke="#d8434c" stroke-width="1.500" fill="none"/><path d="M2.500 1v9.500" stroke="#d8434c" stroke-width="1"/><path d="M6 7.500l4 3.500" stroke="#b9b9b9" stroke-width="1.500"/></svg>
<div class="t" style="left:918.9px;top:739.5px;height:16px;line-height:16px;font-size:14.5px;color:#111;-webkit-text-stroke:.7px #111">]</div>
<svg style="left:940px;top:740px" width="8" height="10.700" viewBox="-1 0 9 12"><path d="M4 .600a1.700 1.700 0 0 1 1.200 2.900c1 .6 1.400 1.700.9 2.700 1.200 1.200 1.900 2.600 1.900 4.800H0c0-2.200.7-3.600 1.900-4.800-.5-1 0-2.100.9-2.700A1.700 1.700 0 0 1 4 .600z" fill="#111"/><path d="M-1 1.200h1.600l-.8 1.200z" fill="#555"/></svg>
<svg style="left:961.500px;top:740px" width="9.800" height="10.700" viewBox="0 0 11 12"><path d="M4 .600a1.700 1.700 0 0 1 1.200 2.900c1 .6 1.400 1.700.9 2.700 1.200 1.200 1.900 2.600 1.900 4.800H0c0-2.200.7-3.600 1.900-4.800-.5-1 0-2.100.9-2.700A1.700 1.700 0 0 1 4 .600z" fill="#d4303c"/><path d="M9 8v3.500M8.300 8.800L9 8" stroke="#444" stroke-width=".7" fill="none"/></svg>
<svg style="left:981.500px;top:739.500px" width="12" height="13" viewBox="0 0 12 13"><rect width="12" height="13" fill="#a07a58"/><rect width="6" height="6.500" fill="#d9b48a"/><rect x="6" y="6.500" width="6" height="6.500" fill="#c9a074"/><rect x="6" width="6" height="6.500" fill="#8a5f40"/><g fill="#35251c"><path d="M1.800 6l.7-3.200h-.9V1.300h2.800v1.500h-.8L4.300 6z"/><path d="M1.800 13l.8-3.800a1 1 0 1 1 1 0l.8 3.800z"/><path d="M7.800 13l.8-3.800a1 1 0 1 1 1 0l.8 3.800z"/></g></svg>
<div class="t" style="left:1006.1px;top:740.0px;height:16px;line-height:16px;font-size:14.5px;color:#151515;font-family:'Liberation Sans','DejaVu Sans',sans-serif;letter-spacing:0.74px">!!</div>
<div class="t" style="left:1031.6px;top:740.0px;height:16px;line-height:16px;font-size:14.5px;color:#151515;font-family:'Liberation Sans','DejaVu Sans',sans-serif">!</div>
<div class="t" style="left:1049.1px;top:740.0px;height:16px;line-height:16px;font-size:14.5px;color:#151515;font-family:'Liberation Sans','DejaVu Sans',sans-serif;letter-spacing:1.71px">!?</div>
<div class="t" style="left:1071.6px;top:740.0px;height:16px;line-height:16px;font-size:14.5px;color:#151515;font-family:'Liberation Sans','DejaVu Sans',sans-serif;letter-spacing:1.71px">?!</div>
<div class="t" style="left:1096.8px;top:740.0px;height:16px;line-height:16px;font-size:14.5px;color:#151515;font-family:'Liberation Sans','DejaVu Sans',sans-serif">?</div>
<div class="t" style="left:1117.1px;top:740.0px;height:16px;line-height:16px;font-size:14.5px;color:#151515;font-family:'Liberation Sans','DejaVu Sans',sans-serif;letter-spacing:-1.34px">??</div>
<div class="t" style="left:1139.4px;top:738.6px;height:16px;line-height:16px;font-size:11.5px;color:#151515;font-family:'Liberation Sans','DejaVu Sans',sans-serif;letter-spacing:0.06px">+−</div>
<div class="t" style="left:1164.4px;top:738.6px;height:16px;line-height:16px;font-size:13.5px;color:#151515;font-family:'Liberation Sans','DejaVu Sans',sans-serif">±</div>
<div class="t" style="left:1186.8px;top:739.1px;height:16px;line-height:16px;font-size:13.5px;color:#151515;font-family:'Liberation Sans','DejaVu Sans',sans-serif">⩲</div>
<div class="t" style="left:1209.4px;top:738.6px;height:16px;line-height:16px;font-size:13.5px;color:#151515;font-family:'Liberation Sans','DejaVu Sans',sans-serif">=</div>
<div class="t" style="left:1230.6px;top:738.6px;height:16px;line-height:16px;font-size:13.5px;color:#151515;font-family:'Liberation Sans','DejaVu Sans',sans-serif">∞</div>
<div class="t" style="left:1276.6px;top:739.1px;height:16px;line-height:16px;font-size:13.5px;color:#151515;font-family:'Liberation Sans','DejaVu Sans',sans-serif">⩱</div>
<div class="t" style="left:1298.6px;top:739.1px;height:16px;line-height:16px;font-size:13.5px;color:#151515;font-family:'Liberation Sans','DejaVu Sans',sans-serif">∓</div>
<div class="t" style="left:1318.1px;top:738.6px;height:16px;line-height:16px;font-size:11.5px;color:#151515;font-family:'Liberation Sans','DejaVu Sans',sans-serif;letter-spacing:1.36px">−+</div>
<div class="t" style="left:1341.9px;top:738.6px;height:16px;line-height:16px;font-size:13.5px;color:#151515;font-family:'Liberation Sans','DejaVu Sans',sans-serif">⇄</div>
<div class="t" style="left:1253.1px;top:736.1px;height:14px;line-height:14px;font-size:12.5px;color:#151515;font-family:'Liberation Sans','DejaVu Sans',sans-serif">∞</div>
<div class="a" style="left:1253.700px;top:747.200px;width:9.500px;height:1.200px;background:#151515"></div><div class="a" style="left:1253.700px;top:750px;width:9.500px;height:1.200px;background:#151515"></div>
<svg style="left:1364px;top:740.500px" width="14" height="12" viewBox="0 0 14 12"><path d="M.8 7.300L8.600.8l4.600 2.400-7.400 7.600z" fill="#5f86d8" stroke="#3d62b0" stroke-width=".8" stroke-linejoin="round"/><path d="M8.600.8l4.600 2.400-2.500 2.500L5.900 3.200z" fill="#e8505c"/><path d="M.8 7.300l5 3.500" stroke="#dfe6f8" stroke-width="1"/></svg>
<svg style="left:1387px;top:740.500px" width="12" height="12" viewBox="0 0 12 12"><path d="M6 .500l1.600 3.700 4 .3-3 2.700 1 3.900L6 9l-3.600 2.100 1-3.900-3-2.700 4-.3z" fill="#f1f1f1" stroke="#b5b5b5" stroke-width=".9"/></svg>
<svg style="left:1409.500px;top:740.500px" width="13" height="12" viewBox="0 0 13 12"><path d="M6 .500l1.600 3.700 4 .3-3 2.700 1 3.900L6 9l-3.600 2.100 1-3.900-3-2.700 4-.3z" fill="#f1f1f1" stroke="#b5b5b5" stroke-width=".9"/><path d="M10 7v4M8 9h4" stroke="#9a9a9a" stroke-width="1"/></svg>
<svg style="left:1431px;top:740px" width="13" height="12" viewBox="0 0 13 12"><path d="M1 1.500c3-.8 6 1 7.500 4l3.500 5M11.500 1L4.500 6.500 2 11" fill="none" stroke="#6a6a6a" stroke-width="1.700" stroke-linecap="round"/></svg>
<div class="a" style="left:1459px;top:746.500px;width:3.600px;height:3.600px;border-radius:50%;background:#111"></div>
<svg style="left:1479px;top:740px" width="7" height="12" viewBox="0 0 7 12"><ellipse cx="3.500" cy="2" rx="2.800" ry="1.500" fill="#bbb" stroke="#666" stroke-width=".6"/><path d="M.7 2v9h5.600V2" fill="#d8d8d8" stroke="#666" stroke-width=".6"/><path d="M.7 4.500h5.600M.7 7h5.600M.7 9.500h5.600" stroke="#666" stroke-width=".6"/></svg>
</div></body></html>
